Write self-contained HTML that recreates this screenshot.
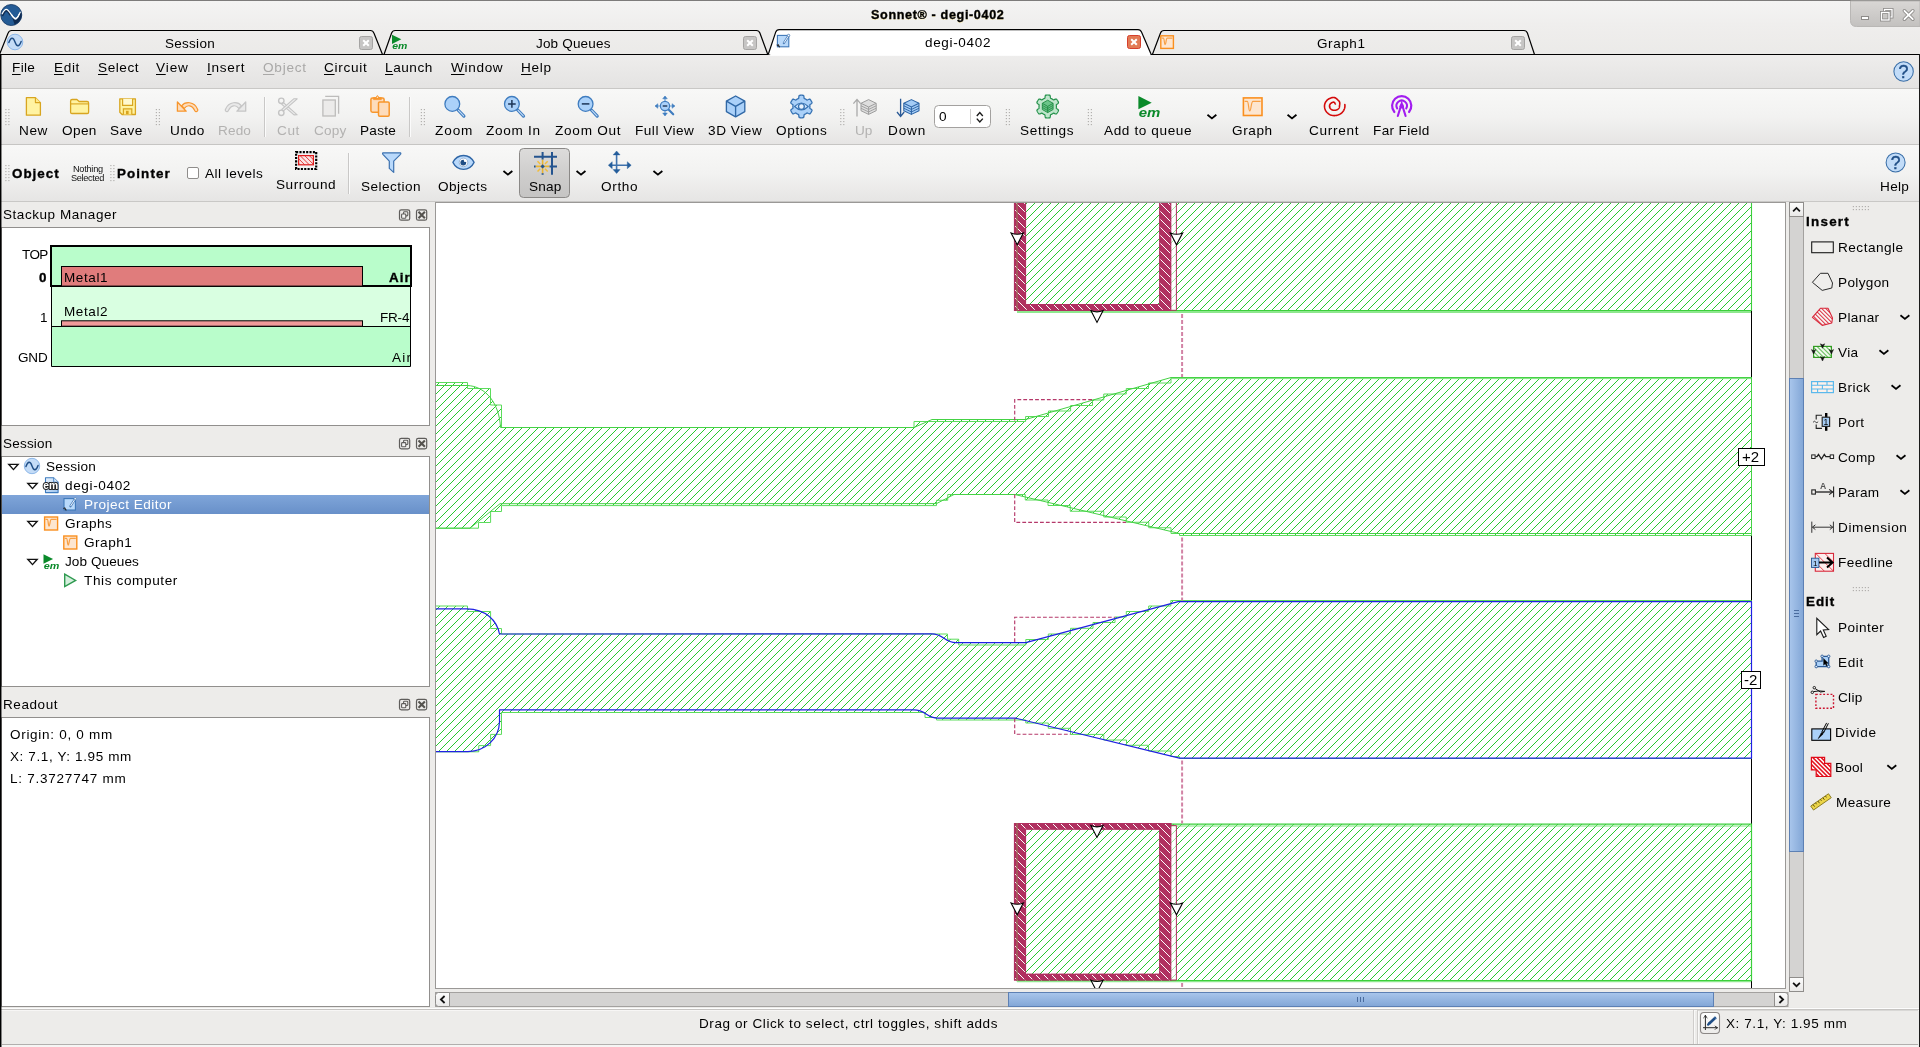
<!DOCTYPE html>
<html lang="en"><head><meta charset="utf-8"><title>Sonnet - degi-0402</title><style>
html,body{margin:0;padding:0}
body{width:1920px;height:1047px;position:relative;overflow:hidden;background:#edecea;font-family:"Liberation Sans", sans-serif;font-size:13.5px;color:#000}
.t{position:absolute;z-index:5;will-change:transform;white-space:pre;line-height:20px;height:20px;font-family:"Liberation Sans", sans-serif}
u{text-decoration:underline;text-underline-offset:2px;text-decoration-thickness:1px}
svg{overflow:visible;display:block}
</style></head><body>
<div style="position:absolute;left:0px;top:0px;width:1920px;height:55px;background:linear-gradient(#f4f4f3,#efeeed 45%,#ebeae8);"></div>
<div style="position:absolute;left:0px;top:0px;width:1920px;height:1px;background:#7d7c7b;"></div>
<div style="position:absolute;left:0px;top:55px;width:1920px;height:33px;background:linear-gradient(#eeedec,#e4e3e2);"></div>
<div style="position:absolute;left:0px;top:88px;width:1920px;height:1px;background:#c9c8c6;"></div>
<div style="position:absolute;left:0px;top:89px;width:1920px;height:55px;background:linear-gradient(#f8f8f7,#f2f2f1 50%,#e6e5e4);"></div>
<div style="position:absolute;left:0px;top:144px;width:1920px;height:1px;background:#c6c5c3;"></div>
<div style="position:absolute;left:0px;top:145px;width:1920px;height:56px;background:linear-gradient(#f8f8f7,#f2f2f1 50%,#e6e5e4);"></div>
<div style="position:absolute;left:0px;top:201px;width:1920px;height:1px;background:#c9c8c6;"></div>
<div style="position:absolute;left:0px;top:54px;width:1px;height:993px;background:#000;z-index:9;"></div>
<div style="position:absolute;left:1px;top:54px;width:1px;height:993px;background:rgba(0,0,0,0.45);z-index:9;"></div>
<div style="position:absolute;left:1919px;top:54px;width:1px;height:993px;background:#1a1a1a;z-index:9;"></div>
<svg style="position:absolute;left:0px;top:0px;z-index:3;will-change:transform;" width="1920" height="60"><defs><linearGradient id="wcg" x1="0" y1="0" x2="0" y2="1"><stop offset="0" stop-color="#d9d7d5"/><stop offset="1" stop-color="#c3c1bf"/></linearGradient></defs><path d="M1850.5,1 V20.5 Q1850.5,26.5 1856.5,26.5 H1920 V1Z" fill="url(#wcg)" stroke="#b9b7b5"/><rect x="1861.5" y="16.5" width="7" height="3" fill="#fff" stroke="#8d8b89" stroke-width="1"/><rect x="1884.5" y="9.5" width="7.5" height="7.5" fill="none" stroke="#8d8b89" stroke-width="3"/><rect x="1884.5" y="9.5" width="7.5" height="7.5" fill="none" stroke="#fff" stroke-width="1.3"/><rect x="1881.5" y="12.5" width="7.5" height="7.5" fill="#c9c7c5" stroke="#8d8b89" stroke-width="3"/><rect x="1881.5" y="12.5" width="7.5" height="7.5" fill="none" stroke="#fff" stroke-width="1.3"/><path d="M1904.4,10.8 l8.4,8.4 M1912.8,10.8 l-8.4,8.4" stroke="#8d8b89" stroke-width="3.6" stroke-linecap="round"/><path d="M1904.4,10.8 l8.4,8.4 M1912.8,10.8 l-8.4,8.4" stroke="#fff" stroke-width="1.8" stroke-linecap="round"/><circle cx="11.25" cy="15" r="10.5" fill="#245b95" stroke="#183c69" stroke-width="0.9"/><path d="M11,14.2 C13,18 14.4,19.4 15.5,19.4 C17.4,19.4 18.8,16.2 20.3,12.4 L21.55,13 A10.5,10.5 0 0 1 14.6,24.6 Z" fill="#102c52"/><path d="M2.6,15.2 C4.2,11.8 5.4,10.8 6.4,10.8 C7.6,10.8 8.6,12.2 10,14.4" fill="none" stroke="#102c52" stroke-width="2" stroke-linecap="round"/><path d="M2.2,13.8 C4,10.2 5.2,9.3 6.3,9.3 C8,9.3 9.4,11.6 11,14.2 C13,17.6 14.4,18.6 15.5,18.6 C17.3,18.6 18.6,15.8 20.2,12.2" fill="none" stroke="#fff" stroke-width="1.25" stroke-linecap="round"/><path d="M11.6,14.4 C13.2,17 14.4,18.2 15.5,18.2 C17,18.2 18.2,16.2 19.6,13.2 C18.4,16.8 17.2,19.2 15.5,19.2 C14.2,19.2 13,17.6 11.6,14.4Z" fill="#fff" stroke="#fff" stroke-width="0.8" stroke-linejoin="round"/><path d="M-0.5,54.5 L8.1,33 Q9,30.5 11.6,30.5 H370.4 Q373,30.5 373.9,33 L382.5,54.5" fill="none" stroke="#000" stroke-width="1.2" stroke-linejoin="round"/><path d="M384,54.5 L391.6,33 Q392.5,30.5 395.1,30.5 H756.4 Q759,30.5 759.9,33 L767.8,54.5" fill="none" stroke="#000" stroke-width="1.2" stroke-linejoin="round"/><path d="M1152.4,54.5 L1160.5,33 Q1161.4,30.5 1164,30.5 H1523.9 Q1526.5,30.5 1527.4,33 L1534.5,54.5" fill="none" stroke="#000" stroke-width="1.2" stroke-linejoin="round"/><path d="M0,54.5 H1920" stroke="#000" stroke-width="1.1"/><path d="M768.2,54.5 L775.7,32.1 Q776.6,29.6 779.2,29.6 H1138 Q1140.6,29.6 1141.5,32.1 L1151.2,54.5" fill="#fff" stroke="#000" stroke-width="1.2" stroke-linejoin="round"/><rect x="770.2" y="53.6" width="380" height="2.2" fill="#fff"/><rect x="359.5" y="36.5" width="13" height="13" rx="2" fill="#c6c5c4" stroke="#a5a4a3"/><path d="M363.2,40.2 l5.6,5.6 M368.8,40.2 l-5.6,5.6" stroke="#fff" stroke-width="2"/><rect x="743.5" y="36.5" width="13" height="13" rx="2" fill="#c6c5c4" stroke="#a5a4a3"/><path d="M747.2,40.2 l5.6,5.6 M752.8,40.2 l-5.6,5.6" stroke="#fff" stroke-width="2"/><rect x="1127.5" y="35.5" width="13" height="13" rx="2" fill="#e27a55" stroke="#d63f2c"/><path d="M1131.2,39.2 l5.6,5.6 M1136.8,39.2 l-5.6,5.6" stroke="#fff" stroke-width="2"/><rect x="1511.5" y="36.5" width="13" height="13" rx="2" fill="#c6c5c4" stroke="#a5a4a3"/><path d="M1515.2,40.2 l5.6,5.6 M1520.8,40.2 l-5.6,5.6" stroke="#fff" stroke-width="2"/><circle cx="15" cy="42" r="7.8" fill="#c4dcf7" stroke="#8db7e8" stroke-width="1"/><path d="M8.8575,42.585 C10.905,36.93 13.245,36.93 15,42 C16.755,47.07 19.095,47.07 21.1425,41.415" fill="none" stroke="#1f4e86" stroke-width="1.4625" stroke-linecap="round"/><g transform="translate(392.2,35.1) scale(0.7)"><path d="M-0.3,-0.6 L13,6 L-0.3,12.6Z" fill="#0a8a2a" stroke="none" stroke-width="1" /><text x="0" y="20.1" font-family='"Liberation Sans",sans-serif' font-size="13.2" font-weight="bold" font-style="italic" fill="#0a8a2a" textLength="21.6" lengthAdjust="spacingAndGlyphs">em</text></g><rect x="777.4" y="35.4" width="11.4" height="11.4" fill="#b9d9fa" stroke="#3f78b8" stroke-width="1.1"/><path d="M783.9,43 L788.4,35.9" stroke="#4f80ba" stroke-width="2.3" stroke-linecap="round"/><path d="M784,42.8 L788.1,36.4" stroke="#eef5fd" stroke-width="1"/><circle cx="788.6" cy="35.5" r="1.2" fill="#fff" stroke="#4f80ba" stroke-width="0.8"/><path d="M776.6,45 l3.2,1.4 M778,44 l1.4,3.4" stroke="#222" stroke-width="0.9"/><rect x="1160.8" y="35.8" width="12.6" height="12.6" fill="#fde6d0" stroke="#fa8f1e" stroke-width="1.4"/><path d="M1161.61,38.1032 h1.76129 c1.08387,0 0.812903,6.50323 1.76129,6.50323 c0.948387,0 0.812903,-6.50323 2.16774,-6.50323 h5.14839" fill="none" stroke="#f8a045" stroke-width="1.2" /></svg>
<span class="t" id="t0" style="left:871.20px;top:5.00px;font-size:12.6px;letter-spacing:0.642px;color:#000;font-weight:bold;-webkit-text-stroke:0.35px;text-shadow:0 1px 0 #fff4c8;">Sonnet® - degi-0402</span>
<span class="t" id="t1" style="left:165.00px;top:33.50px;font-size:13.5px;letter-spacing:0.278px;color:#000;">Session</span>
<span class="t" id="t2" style="left:535.90px;top:33.50px;font-size:13.5px;letter-spacing:0.176px;color:#000;">Job Queues</span>
<span class="t" id="t3" style="left:925.00px;top:32.50px;font-size:13.5px;letter-spacing:0.667px;color:#000;">degi-0402</span>
<span class="t" id="t4" style="left:1317.40px;top:33.50px;font-size:13.5px;letter-spacing:0.574px;color:#000;">Graph1</span>
<span class="t" id="t5" style="left:12.40px;top:57.50px;font-size:13.6px;letter-spacing:0.326px;color:#000;"><u>F</u>ile</span>
<span class="t" id="t6" style="left:53.90px;top:57.50px;font-size:13.6px;letter-spacing:0.654px;color:#000;"><u>E</u>dit</span>
<span class="t" id="t7" style="left:97.70px;top:57.50px;font-size:13.6px;letter-spacing:0.561px;color:#000;"><u>S</u>elect</span>
<span class="t" id="t8" style="left:156.40px;top:57.50px;font-size:13.6px;letter-spacing:0.889px;color:#000;"><u>V</u>iew</span>
<span class="t" id="t9" style="left:206.90px;top:57.50px;font-size:13.6px;letter-spacing:0.717px;color:#000;"><u>I</u>nsert</span>
<span class="t" id="t10" style="left:262.70px;top:57.50px;font-size:13.6px;letter-spacing:0.761px;color:#a9a8a7;"><u>O</u>bject</span>
<span class="t" id="t11" style="left:323.70px;top:57.50px;font-size:13.6px;letter-spacing:0.728px;color:#000;"><u>C</u>ircuit</span>
<span class="t" id="t12" style="left:384.90px;top:57.50px;font-size:13.6px;letter-spacing:0.558px;color:#000;"><u>L</u>aunch</span>
<span class="t" id="t13" style="left:450.70px;top:57.50px;font-size:13.6px;letter-spacing:0.665px;color:#000;"><u>W</u>indow</span>
<span class="t" id="t14" style="left:520.70px;top:57.50px;font-size:13.6px;letter-spacing:0.677px;color:#000;"><u>H</u>elp</span>
<span class="t" id="t15" style="left:18.90px;top:120.50px;font-size:13.6px;letter-spacing:0.598px;color:#000;">New</span>
<span class="t" id="t16" style="left:61.90px;top:120.50px;font-size:13.6px;letter-spacing:0.378px;color:#000;">Open</span>
<span class="t" id="t17" style="left:110.40px;top:120.50px;font-size:13.6px;letter-spacing:0.472px;color:#000;">Save</span>
<span class="t" id="t18" style="left:169.90px;top:120.50px;font-size:13.6px;letter-spacing:0.633px;color:#000;">Undo</span>
<span class="t" id="t19" style="left:218.40px;top:120.50px;font-size:13.6px;letter-spacing:0.133px;color:#b3b2b1;">Redo</span>
<span class="t" id="t20" style="left:276.90px;top:120.50px;font-size:13.6px;letter-spacing:0.622px;color:#b3b2b1;">Cut</span>
<span class="t" id="t21" style="left:313.90px;top:120.50px;font-size:13.6px;letter-spacing:0.222px;color:#b3b2b1;">Copy</span>
<span class="t" id="t22" style="left:360.40px;top:120.50px;font-size:13.6px;letter-spacing:0.284px;color:#000;">Paste</span>
<span class="t" id="t23" style="left:435.10px;top:120.50px;font-size:13.6px;letter-spacing:0.883px;color:#000;">Zoom</span>
<span class="t" id="t24" style="left:486.40px;top:120.50px;font-size:13.6px;letter-spacing:0.704px;color:#000;">Zoom In</span>
<span class="t" id="t25" style="left:554.70px;top:120.50px;font-size:13.6px;letter-spacing:0.738px;color:#000;">Zoom Out</span>
<span class="t" id="t26" style="left:634.80px;top:120.50px;font-size:13.6px;letter-spacing:0.499px;color:#000;">Full View</span>
<span class="t" id="t27" style="left:707.90px;top:120.50px;font-size:13.6px;letter-spacing:0.571px;color:#000;">3D View</span>
<span class="t" id="t28" style="left:775.90px;top:120.50px;font-size:13.6px;letter-spacing:0.640px;color:#000;">Options</span>
<span class="t" id="t29" style="left:855.40px;top:120.50px;font-size:13.6px;letter-spacing:0.009px;color:#b3b2b1;">Up</span>
<span class="t" id="t30" style="left:888.40px;top:120.50px;font-size:13.6px;letter-spacing:0.845px;color:#000;">Down</span>
<span class="t" id="t31" style="left:1019.90px;top:120.50px;font-size:13.6px;letter-spacing:0.639px;color:#000;">Settings</span>
<span class="t" id="t32" style="left:1103.90px;top:120.50px;font-size:13.6px;letter-spacing:0.610px;color:#000;">Add to queue</span>
<span class="t" id="t33" style="left:1231.90px;top:120.50px;font-size:13.6px;letter-spacing:0.580px;color:#000;">Graph</span>
<span class="t" id="t34" style="left:1308.90px;top:120.50px;font-size:13.6px;letter-spacing:0.712px;color:#000;">Current</span>
<span class="t" id="t35" style="left:1372.70px;top:120.50px;font-size:13.6px;letter-spacing:0.332px;color:#000;">Far Field</span>
<span class="t" id="t36" style="left:939.20px;top:106.50px;font-size:13.6px;letter-spacing:0.038px;color:#000;">0</span>
<span class="t" id="t37" style="left:11.90px;top:163.50px;font-size:13.4px;letter-spacing:1.006px;color:#000;font-weight:bold;-webkit-text-stroke:0.35px;">Object</span>
<span class="t" id="t38" style="left:72.70px;top:159.00px;font-size:9.2px;letter-spacing:-0.262px;color:#111;">Nothing</span>
<span class="t" id="t39" style="left:71.20px;top:168.00px;font-size:9.2px;letter-spacing:-0.338px;color:#111;">Selected</span>
<span class="t" id="t40" style="left:116.90px;top:163.50px;font-size:13.4px;letter-spacing:1.093px;color:#000;font-weight:bold;-webkit-text-stroke:0.35px;">Pointer</span>
<span class="t" id="t41" style="left:205.40px;top:163.50px;font-size:13.6px;letter-spacing:0.473px;color:#000;">All levels</span>
<span class="t" id="t42" style="left:276.00px;top:174.50px;font-size:13.6px;letter-spacing:0.525px;color:#000;">Surround</span>
<span class="t" id="t43" style="left:360.90px;top:176.50px;font-size:13.6px;letter-spacing:0.460px;color:#000;">Selection</span>
<span class="t" id="t44" style="left:438.20px;top:176.50px;font-size:13.6px;letter-spacing:0.484px;color:#000;">Objects</span>
<span class="t" id="t45" style="left:529.10px;top:176.50px;font-size:13.6px;letter-spacing:0.150px;color:#000;">Snap</span>
<span class="t" id="t46" style="left:600.90px;top:176.50px;font-size:13.6px;letter-spacing:0.650px;color:#000;">Ortho</span>
<span class="t" id="t47" style="left:1880.40px;top:176.50px;font-size:13.6px;letter-spacing:0.310px;color:#000;">Help</span>
<span class="t" id="t48" style="left:2.80px;top:204.50px;font-size:13.5px;letter-spacing:0.549px;color:#000;">Stackup Manager</span>
<div style="position:absolute;left:1px;top:227px;width:429px;height:199px;background:#fff;border:1px solid #918f8d;box-sizing:border-box;"></div>
<span class="t" id="t49" style="left:21.60px;top:244.50px;font-size:13.5px;letter-spacing:-0.600px;color:#000;">TOP</span>
<span class="t" id="t50" style="left:38.60px;top:267.50px;font-size:13.4px;letter-spacing:0.747px;color:#000;font-weight:bold;-webkit-text-stroke:0.35px;">0</span>
<span class="t" id="t51" style="left:63.80px;top:267.50px;font-size:13.5px;letter-spacing:0.594px;color:#000;">Metal1</span>
<span class="t" id="t52" style="left:389.20px;top:267.50px;font-size:13.4px;letter-spacing:1.045px;color:#000;font-weight:bold;-webkit-text-stroke:0.35px;">Air</span>
<span class="t" id="t53" style="left:63.80px;top:301.50px;font-size:13.5px;letter-spacing:0.594px;color:#000;">Metal2</span>
<span class="t" id="t54" style="left:40.20px;top:307.50px;font-size:13.5px;letter-spacing:-0.600px;color:#000;">1</span>
<span class="t" id="t55" style="left:380.40px;top:307.50px;font-size:13.5px;letter-spacing:-0.200px;color:#000;">FR-4</span>
<span class="t" id="t56" style="left:17.70px;top:347.50px;font-size:13.5px;letter-spacing:-0.150px;color:#000;">GND</span>
<span class="t" id="t57" style="left:391.80px;top:347.50px;font-size:13.5px;letter-spacing:1.200px;color:#000;">Air</span>
<span class="t" id="t58" style="left:2.80px;top:433.50px;font-size:13.5px;letter-spacing:0.211px;color:#000;">Session</span>
<div style="position:absolute;left:1px;top:456px;width:429px;height:231px;background:#fff;border:1px solid #918f8d;box-sizing:border-box;"></div>
<div style="position:absolute;left:2px;top:495px;width:427px;height:19px;background:linear-gradient(#7fa5d9,#6890c9);"></div>
<span class="t" id="t59" style="left:45.80px;top:456.50px;font-size:13.6px;letter-spacing:0.254px;color:#000;">Session</span>
<span class="t" id="t60" style="left:64.70px;top:475.50px;font-size:13.6px;letter-spacing:0.616px;color:#000;">degi-0402</span>
<span class="t" id="t61" style="left:83.80px;top:494.50px;font-size:13.6px;letter-spacing:0.453px;color:#fff;">Project Editor</span>
<span class="t" id="t62" style="left:64.70px;top:513.50px;font-size:13.6px;letter-spacing:0.464px;color:#000;">Graphs</span>
<span class="t" id="t63" style="left:83.80px;top:532.50px;font-size:13.6px;letter-spacing:0.511px;color:#000;">Graph1</span>
<span class="t" id="t64" style="left:64.70px;top:551.50px;font-size:13.6px;letter-spacing:0.065px;color:#000;">Job Queues</span>
<span class="t" id="t65" style="left:83.80px;top:570.50px;font-size:13.6px;letter-spacing:0.606px;color:#000;">This computer</span>
<span class="t" id="t66" style="left:2.80px;top:694.50px;font-size:13.5px;letter-spacing:0.576px;color:#000;">Readout</span>
<div style="position:absolute;left:1px;top:717px;width:429px;height:290px;background:#fff;border:1px solid #918f8d;box-sizing:border-box;"></div>
<span class="t" id="t67" style="left:9.60px;top:724.50px;font-size:13.5px;letter-spacing:0.708px;color:#000;">Origin: 0, 0 mm</span>
<span class="t" id="t68" style="left:9.60px;top:746.50px;font-size:13.5px;letter-spacing:0.617px;color:#000;">X: 7.1, Y: 1.95 mm</span>
<span class="t" id="t69" style="left:9.60px;top:768.50px;font-size:13.5px;letter-spacing:0.759px;color:#000;">L: 7.3727747 mm</span>
<svg style="position:absolute;left:0px;top:0px;z-index:3;will-change:transform;" width="1920" height="1047"><rect x="399.5" y="209.8" width="10.2" height="10.4" rx="1.8" fill="#edecea" stroke="#5f5d5b" stroke-width="1.2"/><rect x="403.6" y="211.7" width="4.2" height="4.2" rx="0.8" fill="none" stroke="#5f5d5b" stroke-width="1.1"/><rect x="401.6" y="214" width="4.2" height="4.2" rx="0.8" fill="#f6f5f4" stroke="#5f5d5b" stroke-width="1.1"/><rect x="416.5" y="209.8" width="10.2" height="10.4" rx="1.8" fill="#edecea" stroke="#5f5d5b" stroke-width="1.2"/><path d="M418.5,211.8 l6.4,6.4 M424.9,211.8 l-6.4,6.4" stroke="#55534f" stroke-width="2.1"/><rect x="51" y="246" width="360" height="40" fill="#b9fdcb"/><rect x="51" y="286" width="360" height="40" fill="#d9ffe1"/><rect x="51" y="326" width="360" height="40" fill="#b9fdcb"/><path d="M51.5,286 V366.5 H410.5 V286 M51,326.5 H411" fill="none" stroke="#000" stroke-width="1"/><path d="M51,246 H411 V286 H51Z" fill="none" stroke="#000" stroke-width="2"/><rect x="61.5" y="266.5" width="301" height="19.6" fill="#e07c7c" stroke="#000" stroke-width="1"/><rect x="61.5" y="320.8" width="301" height="5.4" fill="#f09a9a" stroke="#000" stroke-width="1"/><rect x="399.5" y="438.4" width="10.2" height="10.4" rx="1.8" fill="#edecea" stroke="#5f5d5b" stroke-width="1.2"/><rect x="403.6" y="440.3" width="4.2" height="4.2" rx="0.8" fill="none" stroke="#5f5d5b" stroke-width="1.1"/><rect x="401.6" y="442.6" width="4.2" height="4.2" rx="0.8" fill="#f6f5f4" stroke="#5f5d5b" stroke-width="1.1"/><rect x="416.5" y="438.4" width="10.2" height="10.4" rx="1.8" fill="#edecea" stroke="#5f5d5b" stroke-width="1.2"/><path d="M418.5,440.4 l6.4,6.4 M424.9,440.4 l-6.4,6.4" stroke="#55534f" stroke-width="2.1"/><path d="M8.75,464.3 h9.4 l-4.7,5.3z" fill="#fff" stroke="#111" stroke-width="1.35" stroke-linejoin="miter"/><path d="M27.8,483.3 h9.4 l-4.7,5.3z" fill="#fff" stroke="#111" stroke-width="1.35" stroke-linejoin="miter"/><path d="M27.8,521.3 h9.4 l-4.7,5.3z" fill="#fff" stroke="#111" stroke-width="1.35" stroke-linejoin="miter"/><path d="M27.8,559.3 h9.4 l-4.7,5.3z" fill="#fff" stroke="#111" stroke-width="1.35" stroke-linejoin="miter"/><circle cx="32" cy="466" r="7.7" fill="#c4dcf7" stroke="#8db7e8" stroke-width="1"/><path d="M25.9363,466.577 C27.9575,460.995 30.2675,460.995 32,466 C33.7325,471.005 36.0425,471.005 38.0637,465.423" fill="none" stroke="#1f4e86" stroke-width="1.44375" stroke-linecap="round"/><defs><linearGradient id="docg" x1="0" y1="0" x2="1" y2="1"><stop offset="0" stop-color="#eaf3fd"/><stop offset="1" stop-color="#9cc3ee"/></linearGradient></defs><path d="M45.5,477.8 h8.2 l4.4,4.4 v10.4 h-12.6z" fill="url(#docg)" stroke="#3f7cbf" stroke-width="1.1" stroke-linejoin="round"/><path d="M53.7,477.8 v4.4 h4.4" fill="#d8e8fb" stroke="#3f7cbf" stroke-width="0.9" stroke-linejoin="round"/><text x="43.3" y="489" font-family='"Liberation Sans",sans-serif' font-size="10.8" font-weight="bold" fill="#fff" stroke="#222" stroke-width="2.1" paint-order="stroke" stroke-linejoin="round" textLength="14.8" lengthAdjust="spacingAndGlyphs">em</text><rect x="64" y="498.6" width="11.4" height="11.4" fill="#b9d9fa" stroke="#3f78b8" stroke-width="1.1"/><path d="M70.5,506.2 L75,499.1" stroke="#4f80ba" stroke-width="2.3" stroke-linecap="round"/><path d="M70.6,506 L74.7,499.6" stroke="#eef5fd" stroke-width="1"/><circle cx="75.2" cy="498.7" r="1.2" fill="#fff" stroke="#4f80ba" stroke-width="0.8"/><path d="M63.2,508.2 l3.2,1.4 M64.6,507.2 l1.4,3.4" stroke="#222" stroke-width="0.9"/><rect x="44.6" y="517" width="13" height="13" fill="#fde6d0" stroke="#fa8f1e" stroke-width="1.4"/><path d="M45.4387,519.376 h1.8172 c1.11828,0 0.83871,6.70968 1.8172,6.70968 c0.978495,0 0.83871,-6.70968 2.23656,-6.70968 h5.31183" fill="none" stroke="#f8a045" stroke-width="1.2" /><rect x="63.8" y="536" width="13" height="13" fill="#fde6d0" stroke="#fa8f1e" stroke-width="1.4"/><path d="M64.6387,538.376 h1.8172 c1.11828,0 0.83871,6.70968 1.8172,6.70968 c0.978495,0 0.83871,-6.70968 2.23656,-6.70968 h5.31183" fill="none" stroke="#f8a045" stroke-width="1.2" /><g transform="translate(43.7,554.8) scale(0.72)"><path d="M-0.3,-0.6 L13,6 L-0.3,12.6Z" fill="#0a8a2a" stroke="none" stroke-width="1" /><text x="0" y="20.1" font-family='"Liberation Sans",sans-serif' font-size="13.2" font-weight="bold" font-style="italic" fill="#0a8a2a" textLength="21.6" lengthAdjust="spacingAndGlyphs">em</text></g><path d="M64.7,574.2 L75.6,580.4 L64.7,586.6Z" fill="#d5efdd" stroke="#2f9a50" stroke-width="1.4" stroke-linejoin="miter"/><rect x="399.5" y="699.4" width="10.2" height="10.4" rx="1.8" fill="#edecea" stroke="#5f5d5b" stroke-width="1.2"/><rect x="403.6" y="701.3" width="4.2" height="4.2" rx="0.8" fill="none" stroke="#5f5d5b" stroke-width="1.1"/><rect x="401.6" y="703.6" width="4.2" height="4.2" rx="0.8" fill="#f6f5f4" stroke="#5f5d5b" stroke-width="1.1"/><rect x="416.5" y="699.4" width="10.2" height="10.4" rx="1.8" fill="#edecea" stroke="#5f5d5b" stroke-width="1.2"/><path d="M418.5,701.4 l6.4,6.4 M424.9,701.4 l-6.4,6.4" stroke="#55534f" stroke-width="2.1"/></svg>
<div style="position:absolute;left:435px;top:202px;width:1351px;height:787px;background:#f5f4f3;border:1px solid #9a9896;box-sizing:border-box;"></div>
<svg style="position:absolute;left:436px;top:203px;overflow:hidden;" width="1349" height="785" viewBox="436 203 1349 785"><defs><pattern id="hg" width="8" height="8" patternUnits="userSpaceOnUse"><g fill="#29c731" shape-rendering="crispEdges"><rect x="0" y="5" width="1" height="1"/><rect x="1" y="4" width="1" height="1"/><rect x="2" y="3" width="1" height="1"/><rect x="3" y="2" width="1" height="1"/><rect x="4" y="1" width="1" height="1"/><rect x="5" y="0" width="1" height="1"/><rect x="6" y="7" width="1" height="1"/><rect x="7" y="6" width="1" height="1"/></g></pattern><pattern id="hv" width="8" height="8" patternUnits="userSpaceOnUse"><rect width="8" height="8" fill="#b03060"/><g fill="#fff" shape-rendering="crispEdges"><rect x="0" y="3" width="1" height="1"/><rect x="1" y="4" width="1" height="1"/><rect x="2" y="5" width="1" height="1"/><rect x="3" y="6" width="1" height="1"/><rect x="4" y="7" width="1" height="1"/><rect x="5" y="0" width="1" height="1"/><rect x="6" y="1" width="1" height="1"/><rect x="7" y="2" width="1" height="1"/></g></pattern></defs><rect x="436" y="203" width="1349" height="785" fill="#fff"/><g fill="url(#hg)" stroke="none"><rect x="1017" y="195" width="734.5" height="116.5"/><rect x="1017" y="824" width="734.5" height="157.3"/><polygon points="430,382.5 467.5,382.5 467.5,388.5 490.5,388.5 490.5,405 501.5,405 501.5,427.5 914,427.5 914,421.5 1025.6,421.5 1025.6,416.5 1048.5,416.5 1048.5,411 1070.6,411 1070.6,405.5 1092.5,405.5 1092.5,400 1103.75,400 1103.75,394 1126.25,394 1126.25,388.5 1148.5,388.5 1148.5,383 1171,383 1171,377.5 1751.5,377.5 1751.5,535.5 1179.5,535.5 1179.5,533.5 1171,533.5 1171,527.75 1148.75,527.75 1148.75,522.25 1126.25,522.25 1126.25,517 1103.75,517 1103.75,511.25 1070.25,511.25 1070.25,505.5 1048,505.5 1048,500 1025.25,500 1025.25,494.5 947.75,494.5 947.75,500.25 936.5,500.25 936.5,505.6 501.5,505.6 501.5,511.5 490.6,511.5 490.6,522.5 478.5,522.5 478.5,528.2 430,528.2"/><path d="M430,385.5 L467,385.5 C486,386 499.5,404 500.5,427.5 L914,427.5 L932,419.5 L1025.6,419.5 L1171,377.5 L1751.5,377.5 L1751.5,533.5 L1179.5,533.5 L1014.75,494.5 L954,494.5 L936.5,503.6 L500,503.7 L470,528.2 L430,528.2Z"/><polygon points="430,606 467.5,606 467.5,611.5 490.6,611.5 490.6,628.5 501.5,628.5 501.5,634 947.5,634 947.5,639.2 958.7,639.2 958.7,645 1025.8,645 1025.8,639.5 1048.3,639.5 1048.3,634 1070.5,634 1070.5,628.3 1093,628.3 1093,622.5 1115,622.5 1115,617 1126.3,617 1126.3,611.5 1148.7,611.5 1148.7,606 1170.8,606 1170.8,600.5 1751.5,600.5 1751.5,758.5 1179.4,758.5 1179.4,756.5 1171,756.5 1171,751 1148.5,751 1148.5,745.25 1126.5,745.25 1126.5,740 1103.75,740 1103.75,734.4 1070.5,734.4 1070.5,728.3 1048.3,728.3 1048.3,723 1025.8,723 1025.8,720 936.5,720 936.5,717.5 925,717.5 925,712.5 501.5,712.5 501.5,734.4 490.6,734.4 490.6,745.6 478.75,745.6 478.75,751.8 430,751.8"/><path d="M430,608.8 L467,608.8 C485,609 497,620 499.5,634 L931.7,633.9 C944,634 944,642.6 956,642.6 L1025.8,642.6 L1178.3,601.7 L1751.5,601.7 L1751.5,758.2 L1179.4,758.2 L1015.8,718.2 L938,718.2 C926,718 926,709.9 914,709.9 L499.5,709.9 L499.5,722 C499,738 486,751.3 468,751.6 L430,751.6Z"/></g><rect x="1751" y="203" width="1" height="785" fill="#000"/><g fill="none" stroke="#4fd64f" stroke-width="1"><path d="M1017,310.5 H1751.5 V203" stroke="#3ccf3c" stroke-width="1.1"/><path d="M1017,312 H1751" stroke="#8ee88e" stroke-width="1.9"/><path d="M1017,981.3 V824.2 H1751.5 V981.3" stroke="#3ccf3c" stroke-width="1.2"/><path d="M1172,826 H1751" stroke="#7be37b"/><path d="M1017,980.5 H1751.5" stroke="#3ccf3c" stroke-width="1.1"/><path d="M1017,981.6 H1751" stroke="#8ee88e" stroke-width="1.2"/><polygon points="430,382.5 467.5,382.5 467.5,388.5 490.5,388.5 490.5,405 501.5,405 501.5,427.5 914,427.5 914,421.5 1025.6,421.5 1025.6,416.5 1048.5,416.5 1048.5,411 1070.6,411 1070.6,405.5 1092.5,405.5 1092.5,400 1103.75,400 1103.75,394 1126.25,394 1126.25,388.5 1148.5,388.5 1148.5,383 1171,383 1171,377.5 1751.5,377.5 1751.5,535.5 1179.5,535.5 1179.5,533.5 1171,533.5 1171,527.75 1148.75,527.75 1148.75,522.25 1126.25,522.25 1126.25,517 1103.75,517 1103.75,511.25 1070.25,511.25 1070.25,505.5 1048,505.5 1048,500 1025.25,500 1025.25,494.5 947.75,494.5 947.75,500.25 936.5,500.25 936.5,505.6 501.5,505.6 501.5,511.5 490.6,511.5 490.6,522.5 478.5,522.5 478.5,528.2 430,528.2" stroke="#5cdc5c"/><path d="M430,385.5 L467,385.5 C486,386 499.5,404 500.5,427.5 L914,427.5 L932,419.5 L1025.6,419.5 L1171,377.5 L1751.5,377.5 L1751.5,533.5 L1179.5,533.5 L1014.75,494.5 L954,494.5 L936.5,503.6 L500,503.7 L470,528.2 L430,528.2Z" stroke="#45d245"/><path d="M1171,378.6 H1751" stroke="#7be37b"/><polygon points="430,606 467.5,606 467.5,611.5 490.6,611.5 490.6,628.5 501.5,628.5 501.5,634 947.5,634 947.5,639.2 958.7,639.2 958.7,645 1025.8,645 1025.8,639.5 1048.3,639.5 1048.3,634 1070.5,634 1070.5,628.3 1093,628.3 1093,622.5 1115,622.5 1115,617 1126.3,617 1126.3,611.5 1148.7,611.5 1148.7,606 1170.8,606 1170.8,600.5 1751.5,600.5 1751.5,758.5 1179.4,758.5 1179.4,756.5 1171,756.5 1171,751 1148.5,751 1148.5,745.25 1126.5,745.25 1126.5,740 1103.75,740 1103.75,734.4 1070.5,734.4 1070.5,728.3 1048.3,728.3 1048.3,723 1025.8,723 1025.8,720 936.5,720 936.5,717.5 925,717.5 925,712.5 501.5,712.5 501.5,734.4 490.6,734.4 490.6,745.6 478.75,745.6 478.75,751.8 430,751.8" stroke="#5cdc5c"/></g><path d="M430,608.8 L467,608.8 C485,609 497,620 499.5,634 L931.7,633.9 C944,634 944,642.6 956,642.6 L1025.8,642.6 L1178.3,601.7 L1751.5,601.7 L1751.5,758.2 L1179.4,758.2 L1015.8,718.2 L938,718.2 C926,718 926,709.9 914,709.9 L499.5,709.9 L499.5,722 C499,738 486,751.3 468,751.6 L430,751.6Z" fill="none" stroke="#2020e4" stroke-width="1.2" stroke-linejoin="round"/><path d="M1014,160 H1171.3 V310.8 H1014Z M1026,166.8 V304 H1159.3 V166.8Z" fill="url(#hv)" fill-rule="evenodd"/><path d="M1014.5,160.5 H1170.8 V310.3 H1014.5Z M1025.5,166.3 V304.5 H1159.8 V166.3Z" fill="none" stroke="#b03060" stroke-width="1.2"/><path d="M1014,823 H1171.3 V980.4 H1014Z M1026,829.6 V973.8 H1159.3 V829.6Z" fill="url(#hv)" fill-rule="evenodd"/><path d="M1014.5,823.5 H1170.8 V979.9 H1014.5Z M1025.5,829.1 V974.3 H1159.8 V829.1Z" fill="none" stroke="#b03060" stroke-width="1.2"/><rect x="1016.3" y="203" width="1.6" height="108" fill="#9a6a58" opacity="0.85"/><rect x="1016.3" y="823" width="1.6" height="157.5" fill="#9a6a58" opacity="0.85"/><rect x="1171.3" y="203" width="4.6" height="107" fill="#fff" opacity="0.55"/><rect x="1171.3" y="826" width="4.6" height="154" fill="#fff" opacity="0.55"/><path d="M1176.4,203 V310.3 H1171" fill="none" stroke="#b03060" stroke-width="1"/><path d="M1171,825.6 H1176.4 V980 H1171" fill="none" stroke="#b03060" stroke-width="1"/><g fill="none" stroke="#b5386a" stroke-width="1.15" stroke-dasharray="3.8,2.1"><path d="M1014.7,420.5 V399.6 H1092.5"/><path d="M1014.7,494.5 V522.3 H1126"/><path d="M1014.7,642 V617.2 H1115"/><path d="M1014.7,718.5 V734.2 H1070.5"/></g><g fill="none" stroke="#d283a5" stroke-width="2" stroke-dasharray="3.9,2.1"><path d="M1182.1,314 V377"/><path d="M1182.1,537.5 V600.5"/><path d="M1182.1,760.5 V823.5"/><path d="M1182.1,983 V988"/></g><path d="M1011.1,233 Q1017.2,235.6 1023.3,233 L1017.2,244.8Z" fill="#fff" stroke="#000" stroke-width="1.1" stroke-linejoin="miter"/><path d="M1170.4,233 Q1176.5,235.6 1182.6,233 L1176.5,244.8Z" fill="#fff" stroke="#000" stroke-width="1.1" stroke-linejoin="miter"/><path d="M1090.9,310.6 Q1097,313.2 1103.1,310.6 L1097,322.4Z" fill="#fff" stroke="#000" stroke-width="1.1" stroke-linejoin="miter"/><path d="M1090.9,825.6 Q1097,828.2 1103.1,825.6 L1097,837.4Z" fill="#fff" stroke="#000" stroke-width="1.1" stroke-linejoin="miter"/><path d="M1011.1,903 Q1017.2,905.6 1023.3,903 L1017.2,914.8Z" fill="#fff" stroke="#000" stroke-width="1.1" stroke-linejoin="miter"/><path d="M1170.4,903 Q1176.5,905.6 1182.6,903 L1176.5,914.8Z" fill="#fff" stroke="#000" stroke-width="1.1" stroke-linejoin="miter"/><path d="M1090.9,980.2 Q1097,982.8 1103.1,980.2 L1097,992Z" fill="#fff" stroke="#000" stroke-width="1.1" stroke-linejoin="miter"/><rect x="1738.5" y="448.5" width="26" height="17" fill="#fff" stroke="#000"/><rect x="1741.5" y="671.5" width="19" height="17" fill="#fff" stroke="#000"/></svg>
<span class="t" id="t70" style="left:1742.40px;top:446.50px;font-size:15px;letter-spacing:0.000px;color:#000;">+2</span>
<span class="t" id="t71" style="left:1744.00px;top:669.50px;font-size:15px;letter-spacing:0.000px;color:#000;">-2</span>
<svg style="position:absolute;left:0px;top:0px;" width="1920" height="1047"><defs><linearGradient id="sbh" x1="0" y1="0" x2="0" y2="1"><stop offset="0" stop-color="#a9c6ec"/><stop offset="1" stop-color="#82a6d6"/></linearGradient><linearGradient id="sbv" x1="0" y1="0" x2="1" y2="0"><stop offset="0" stop-color="#a9c6ec"/><stop offset="1" stop-color="#82a6d6"/></linearGradient><linearGradient id="btn" x1="0" y1="0" x2="0" y2="1"><stop offset="0" stop-color="#fdfdfd"/><stop offset="1" stop-color="#e9e8e7"/></linearGradient></defs><rect x="435.5" y="992.5" width="1352.5" height="14" fill="#d4d3d2" stroke="#a3a19f"/><rect x="1008.5" y="992.5" width="705" height="14" fill="url(#sbh)" stroke="#5d80b4"/><path d="M1357.5,997 v5 M1360.5,997 v5 M1363.5,997 v5" stroke="#4a6c9f" stroke-width="1"/><path d="M438.5,992.5 h11 v14 h-11 q-3,0 -3,-3 v-8 q0,-3 3,-3z" fill="url(#btn)" stroke="#8f8d8b"/><path d="M444.6,996 L440.9,999.5 L444.6,1003" fill="none" stroke="#111" stroke-width="1.8"/><path d="M1774.5,992.5 h10.5 q3,0 3,3 v8 q0,3 -3,3 h-10.5z" fill="url(#btn)" stroke="#8f8d8b"/><path d="M1779.4,996 L1783.1,999.5 L1779.4,1003" fill="none" stroke="#111" stroke-width="1.8"/><rect x="1789.5" y="202.5" width="14" height="789" fill="#d4d3d2" stroke="#a3a19f"/><rect x="1789.5" y="378.5" width="14" height="473" fill="url(#sbv)" stroke="#5d80b4"/><path d="M1794,610.5 h5 M1794,613.5 h5 M1794,616.5 h5" stroke="#4a6c9f" stroke-width="1"/><rect x="1789.5" y="202.5" width="14" height="14" fill="url(#btn)" stroke="#8f8d8b"/><path d="M1793.1,211.3 L1796.5,207.9 L1799.9,211.3" fill="none" stroke="#111" stroke-width="1.7"/><rect x="1789.5" y="977.5" width="14" height="14" fill="url(#btn)" stroke="#8f8d8b"/><path d="M1793.1,982.8 L1796.5,986.2 L1799.9,982.8" fill="none" stroke="#111" stroke-width="1.7"/></svg>
<span class="t" id="t72" style="left:1805.80px;top:211.50px;font-size:13.4px;letter-spacing:1.266px;color:#000;font-weight:bold;-webkit-text-stroke:0.35px;">Insert</span>
<span class="t" id="t73" style="left:1805.80px;top:591.50px;font-size:13.4px;letter-spacing:0.968px;color:#000;font-weight:bold;-webkit-text-stroke:0.35px;">Edit</span>
<span class="t" id="t74" style="left:1838.20px;top:237.50px;font-size:13.6px;letter-spacing:0.485px;color:#000;">Rectangle</span>
<span class="t" id="t75" style="left:1838.20px;top:272.50px;font-size:13.6px;letter-spacing:0.329px;color:#000;">Polygon</span>
<span class="t" id="t76" style="left:1838.20px;top:307.50px;font-size:13.6px;letter-spacing:0.361px;color:#000;">Planar</span>
<span class="t" id="t77" style="left:1838.20px;top:342.50px;font-size:13.6px;letter-spacing:0.347px;color:#000;">Via</span>
<span class="t" id="t78" style="left:1838.20px;top:377.50px;font-size:13.6px;letter-spacing:0.470px;color:#000;">Brick</span>
<span class="t" id="t79" style="left:1838.20px;top:412.50px;font-size:13.6px;letter-spacing:0.387px;color:#000;">Port</span>
<span class="t" id="t80" style="left:1838.20px;top:447.50px;font-size:13.6px;letter-spacing:0.278px;color:#000;">Comp</span>
<span class="t" id="t81" style="left:1838.20px;top:482.50px;font-size:13.6px;letter-spacing:0.263px;color:#000;">Param</span>
<span class="t" id="t82" style="left:1838.20px;top:517.50px;font-size:13.6px;letter-spacing:0.585px;color:#000;">Dimension</span>
<span class="t" id="t83" style="left:1838.20px;top:552.50px;font-size:13.6px;letter-spacing:0.392px;color:#000;">Feedline</span>
<span class="t" id="t84" style="left:1838.00px;top:617.50px;font-size:13.6px;letter-spacing:0.470px;color:#000;">Pointer</span>
<span class="t" id="t85" style="left:1838.00px;top:652.50px;font-size:13.6px;letter-spacing:0.621px;color:#000;">Edit</span>
<span class="t" id="t86" style="left:1838.00px;top:687.50px;font-size:13.6px;letter-spacing:0.293px;color:#000;">Clip</span>
<span class="t" id="t87" style="left:1834.90px;top:722.50px;font-size:13.6px;letter-spacing:0.644px;color:#000;">Divide</span>
<span class="t" id="t88" style="left:1834.90px;top:757.50px;font-size:13.6px;letter-spacing:0.227px;color:#000;">Bool</span>
<span class="t" id="t89" style="left:1836.10px;top:792.50px;font-size:13.6px;letter-spacing:0.318px;color:#000;">Measure</span>
<div style="position:absolute;left:0px;top:1007px;width:1920px;height:40px;background:#edecea;"></div>
<div style="position:absolute;left:0px;top:1007px;width:1920px;height:1px;background:#ebeae8;"></div>
<div style="position:absolute;left:0px;top:1008px;width:1920px;height:1px;background:#fdfdfd;"></div>
<div style="position:absolute;left:0px;top:1009px;width:1920px;height:1px;background:#c6c4c2;"></div>
<div style="position:absolute;left:0px;top:1010px;width:1920px;height:1px;background:#f7f6f5;"></div>
<div style="position:absolute;left:2px;top:1044px;width:1916px;height:1px;background:#b1afad;"></div>
<div style="position:absolute;left:2px;top:1045px;width:1916px;height:2px;background:#f6f5f4;"></div>
<div style="position:absolute;left:1693px;top:1010px;width:1px;height:34px;background:#cfcdcb;"></div>
<div style="position:absolute;left:1694px;top:1010px;width:1px;height:34px;background:#f9f9f8;"></div>
<div style="position:absolute;left:1697px;top:1010px;width:1px;height:34px;background:#cfcdcb;"></div>
<div style="position:absolute;left:1698px;top:1010px;width:1px;height:34px;background:#f9f9f8;"></div>
<div style="position:absolute;left:1698px;top:1010px;width:220px;height:1px;background:#d9d8d6;"></div>
<svg style="position:absolute;left:0px;top:0px;z-index:3;" width="1920" height="1047"><defs><linearGradient id="sbb" x1="0" y1="0" x2="0" y2="1"><stop offset="0" stop-color="#ffffff"/><stop offset="1" stop-color="#ecebe9"/></linearGradient></defs><rect x="1700.5" y="1012.5" width="19" height="21" rx="3.5" fill="url(#sbb)" stroke="#8b8785" stroke-width="1.1"/><path d="M1705.4,1015.4 V1030 M1703,1027.7 H1717.4 M1703.4,1018 Q1705,1017 1705.4,1015.2 Q1705.8,1017 1707.4,1018 M1715,1025.8 Q1716,1027.3 1717.6,1027.7 Q1716,1028.1 1715,1029.6" fill="none" stroke="#2a2a2a" stroke-width="1"/><path d="M1709,1023.7 L1715.9,1017.2" fill="none" stroke="#1f4e86" stroke-width="2.7" stroke-linecap="butt"/><path d="M1708.1,1024.6 L1709.8,1022.9" stroke="#1f4e86" stroke-width="2.2" stroke-linecap="round"/><path d="M1714.3,1017.2 L1716.2,1019.1" stroke="#4b7ab5" stroke-width="0.8"/></svg>
<span class="t" id="t90" style="left:698.80px;top:1013.50px;font-size:13.5px;letter-spacing:0.591px;color:#000;">Drag or Click to select, ctrl toggles, shift adds</span>
<span class="t" id="t91" style="left:1725.90px;top:1013.50px;font-size:13.5px;letter-spacing:0.582px;color:#000;">X: 7.1, Y: 1.95 mm</span>
<svg style="position:absolute;left:0px;top:0px;z-index:2;will-change:transform;" width="1920" height="1047"><path d="M1900.45,315.3 L1904.9,318.9 L1909.35,315.3" fill="none" stroke="#000" stroke-width="1.8" stroke-linecap="butt" stroke-linejoin="miter"/><path d="M1879.45,350.3 L1883.9,353.9 L1888.35,350.3" fill="none" stroke="#000" stroke-width="1.8" stroke-linecap="butt" stroke-linejoin="miter"/><path d="M1891.55,385.3 L1896,388.9 L1900.45,385.3" fill="none" stroke="#000" stroke-width="1.8" stroke-linecap="butt" stroke-linejoin="miter"/><path d="M1896.55,455.3 L1901,458.9 L1905.45,455.3" fill="none" stroke="#000" stroke-width="1.8" stroke-linecap="butt" stroke-linejoin="miter"/><path d="M1900.45,490.3 L1904.9,493.9 L1909.35,490.3" fill="none" stroke="#000" stroke-width="1.8" stroke-linecap="butt" stroke-linejoin="miter"/><path d="M1887.35,765.3 L1891.8,768.9 L1896.25,765.3" fill="none" stroke="#000" stroke-width="1.8" stroke-linecap="butt" stroke-linejoin="miter"/><rect x="1852.8" y="206" width="1.15" height="1.15" fill="#b0aeac"/><rect x="1852.8" y="209" width="1.15" height="1.15" fill="#b0aeac"/><rect x="1855.8" y="206" width="1.15" height="1.15" fill="#b0aeac"/><rect x="1855.8" y="209" width="1.15" height="1.15" fill="#b0aeac"/><rect x="1858.8" y="206" width="1.15" height="1.15" fill="#b0aeac"/><rect x="1858.8" y="209" width="1.15" height="1.15" fill="#b0aeac"/><rect x="1861.8" y="206" width="1.15" height="1.15" fill="#b0aeac"/><rect x="1861.8" y="209" width="1.15" height="1.15" fill="#b0aeac"/><rect x="1864.8" y="206" width="1.15" height="1.15" fill="#b0aeac"/><rect x="1864.8" y="209" width="1.15" height="1.15" fill="#b0aeac"/><rect x="1867.8" y="206" width="1.15" height="1.15" fill="#b0aeac"/><rect x="1867.8" y="209" width="1.15" height="1.15" fill="#b0aeac"/><rect x="1852.8" y="587" width="1.15" height="1.15" fill="#b0aeac"/><rect x="1852.8" y="590" width="1.15" height="1.15" fill="#b0aeac"/><rect x="1855.8" y="587" width="1.15" height="1.15" fill="#b0aeac"/><rect x="1855.8" y="590" width="1.15" height="1.15" fill="#b0aeac"/><rect x="1858.8" y="587" width="1.15" height="1.15" fill="#b0aeac"/><rect x="1858.8" y="590" width="1.15" height="1.15" fill="#b0aeac"/><rect x="1861.8" y="587" width="1.15" height="1.15" fill="#b0aeac"/><rect x="1861.8" y="590" width="1.15" height="1.15" fill="#b0aeac"/><rect x="1864.8" y="587" width="1.15" height="1.15" fill="#b0aeac"/><rect x="1864.8" y="590" width="1.15" height="1.15" fill="#b0aeac"/><rect x="1867.8" y="587" width="1.15" height="1.15" fill="#b0aeac"/><rect x="1867.8" y="590" width="1.15" height="1.15" fill="#b0aeac"/><rect x="1811.7" y="241.9" width="21.6" height="10.8" fill="#efeeec" stroke="#1a1a1a" stroke-width="1.1"/><path d="M1812.4,282.3 L1820.4,273.3 L1828,273.3 L1832.5,283 L1831.8,288 L1822.2,290.4 Z" fill="#efeeec" stroke="#2a2a2a" stroke-width="1.0" stroke-linejoin="round"/><path d="M1812.4,317.3 L1820.4,308.3 L1828,308.3 L1832.5,318 L1831.8,323 L1822.2,325.4 Z" fill="#f7f6f5"/><clipPath id="cp1"><path d="M1812.4,317.3 L1820.4,308.3 L1828,308.3 L1832.5,318 L1831.8,323 L1822.2,325.4 Z"/></clipPath><g clip-path="url(#cp1)"><path d="M1791.2,306 L1812.2,327 M1795.2,306 L1816.2,327 M1799.2,306 L1820.2,327 M1803.2,306 L1824.2,327 M1807.2,306 L1828.2,327 M1811.2,306 L1832.2,327 M1815.2,306 L1836.2,327 M1819.2,306 L1840.2,327 M1823.2,306 L1844.2,327 M1827.2,306 L1848.2,327 M1831.2,306 L1852.2,327 " fill="none" stroke="#dd3b4a" stroke-width="1.05" /></g><path d="M1812.4,317.3 L1820.4,308.3 L1828,308.3 L1832.5,318 L1831.8,323 L1822.2,325.4 Z" fill="none" stroke="#d8283a" stroke-width="1.1" stroke-linejoin="round"/><rect x="1813.6" y="346.4" width="17.8" height="11" fill="#f3faf0" stroke="none"/><clipPath id="cp2"><path d="M1813.6,346.4 h17.8 v11 h-17.8z"/></clipPath><g clip-path="url(#cp2)"><path d="M1803.8,346.4 L1814.8,357.4 M1808.2,346.4 L1819.2,357.4 M1812.6,346.4 L1823.6,357.4 M1817,346.4 L1828,357.4 M1821.4,346.4 L1832.4,357.4 M1825.8,346.4 L1836.8,357.4 M1830.2,346.4 L1841.2,357.4 " fill="none" stroke="#74c46a" stroke-width="1.25" /></g><rect x="1813.6" y="346.4" width="17.8" height="11" fill="none" stroke="#2f9a1f" stroke-width="1.15"/><path d="M1811.47,349.6 L1813.6,350.666 L1815.73,349.6 L1813.6,354.028Z" fill="#111" stroke="#111" stroke-width="0.5" /><path d="M1829.27,349.6 L1831.4,350.666 L1833.53,349.6 L1831.4,354.028Z" fill="#111" stroke="#111" stroke-width="0.5" /><path d="M1820.37,343.8 L1822.5,344.866 L1824.63,343.8 L1822.5,348.228Z" fill="#111" stroke="#111" stroke-width="0.5" /><path d="M1820.37,356.6 L1822.5,357.666 L1824.63,356.6 L1822.5,361.028Z" fill="#111" stroke="#111" stroke-width="0.5" /><rect x="1811.6" y="381.6" width="21.8" height="11" fill="#fdf1ea" stroke="#5bb9ec" stroke-width="1.2"/><path d="M1811.6,385.3 h21.8 M1811.6,389 h21.8 M1817.6,381.6 v3.7 M1827,381.6 v3.7 M1822.4,385.3 v3.7 M1817.6,389 v3.7 M1827,389 v3.7" fill="none" stroke="#5bb9ec" stroke-width="1.1" /><path d="M1822,415.2 H1816.2 V419.4 M1816.2,424.4 V428.4 H1822" fill="none" stroke="#222" stroke-width="1.1" /><path d="M1813,422.4 q1.3,-2.2 2.6,-0.4 q1.3,1.8 2.6,-0.4" fill="none" stroke="#333" stroke-width="0.9" /><rect x="1825" y="413" width="2.4" height="17.8" fill="#000"/><rect x="1822.2" y="417.2" width="7.4" height="9.2" fill="#a5cbf3" stroke="#2a2a2a" stroke-width="1.2"/><text x="1825.9" y="425.3" text-anchor="middle" font-family='"Liberation Sans",sans-serif' font-size="8.6" fill="#000">1</text><path d="M1815.3,456.7 h1.7 l1.5,-2.3 l2.9,4.7 l2.9,-4.7 l1.5,2.3 h4.2" fill="none" stroke="#222" stroke-width="1.3" stroke-linejoin="miter"/><rect x="1811.7" y="454.9" width="3.4" height="3.6" fill="#f4f3f2" stroke="#222" stroke-width="1"/><rect x="1830.2" y="454.9" width="3.4" height="3.6" fill="#f4f3f2" stroke="#222" stroke-width="1"/><rect x="1811.8" y="489.9" width="3.6" height="4.2" fill="#f4f3f2" stroke="#222" stroke-width="1.1"/><path d="M1815.6,492 H1832.4" fill="none" stroke="#444" stroke-width="1.6" /><path d="M1829.2,489.4 L1832.8,492 L1829.2,494.6 M1833.6,486.6 V497.2" fill="none" stroke="#222" stroke-width="1.1" /><text x="1823" y="489.3" text-anchor="middle" font-family='"Liberation Sans",sans-serif' font-size="8.6" font-weight="bold" fill="#555">A</text><path d="M1811.8,521.6 V532.8 M1833.4,521.6 V532.8 M1812.4,527.2 H1832.8 M1815.4,524.8 L1812.4,527.2 L1815.4,529.6 M1829.8,524.8 L1832.8,527.2 L1829.8,529.6" fill="none" stroke="#333" stroke-width="1.0" /><rect x="1815.3" y="553.4" width="18.2" height="17.8" fill="#fdeeee" stroke="none"/><clipPath id="cp3"><path d="M1815.3,553.4 h18.2 v17.8 h-18.2z"/></clipPath><g clip-path="url(#cp3)"><path d="M1797.5,553.4 L1815.3,571.2 M1806.6,553.4 L1824.4,571.2 M1815.7,553.4 L1833.5,571.2 M1824.8,553.4 L1842.6,571.2 " fill="none" stroke="#e0444f" stroke-width="1.0" /></g><rect x="1815.3" y="553.4" width="18.2" height="17.8" fill="none" stroke="#d8283a" stroke-width="1.1"/><rect x="1811.5" y="558.2" width="7.4" height="9.2" fill="#a5cbf3" stroke="#24548f" stroke-width="0.9"/><text x="1815.2" y="566" text-anchor="middle" font-family='"Liberation Sans",sans-serif' font-size="8" fill="#000">1</text><path d="M1819,562.5 H1832 M1827,557.6 L1832.6,562.5 L1827,567.4" fill="none" stroke="#000" stroke-width="2.0" stroke-linejoin="miter"/><path d="M1816.8,618.4 V634.6 L1820.6,631 L1823.6,637.4 L1826.2,636.2 L1823.3,630 L1828.6,629.6Z" fill="#fff" stroke="#1a1a1a" stroke-width="1.1" stroke-linejoin="miter"/><path d="M1816.2,666.6 V661.2 H1822.1 V656.3 H1828.7 V666.6Z" fill="#abd1f9" stroke="#2b5a96" stroke-width="1.3" stroke-linejoin="round"/><circle cx="1816.2" cy="661.2" r="1.25" fill="#eaf3fd" stroke="#2b5a96" stroke-width="0.9"/><circle cx="1816.2" cy="666.6" r="1.25" fill="#eaf3fd" stroke="#2b5a96" stroke-width="0.9"/><circle cx="1822.1" cy="656.3" r="1.25" fill="#eaf3fd" stroke="#2b5a96" stroke-width="0.9"/><circle cx="1828.7" cy="656.3" r="1.25" fill="#eaf3fd" stroke="#2b5a96" stroke-width="0.9"/><circle cx="1828.7" cy="666.6" r="1.25" fill="#eaf3fd" stroke="#2b5a96" stroke-width="0.9"/><path d="M1823.6,658.4 V665.2 L1825.2,663.8 L1826.4,666 L1827.4,665.5 L1826.3,663.4 L1828.2,663.2Z" fill="#000" stroke="#000" stroke-width="0.4" /><rect x="1815.9" y="694.4" width="17.6" height="13.8" fill="none" stroke="#cc1530" stroke-width="1.4" stroke-dasharray="1.9,1.75"/><path d="M1815.2,688.6 L1820.4,692 L1824.8,691.4 M1813.3,691.7 L1819,690.9 L1824.8,691.4" fill="none" stroke="#111" stroke-width="1.0" stroke-linejoin="round"/><circle cx="1814.3" cy="687.7" r="1.25" fill="#edecea" stroke="#111" stroke-width="0.9"/><circle cx="1812.3" cy="692.3" r="1.25" fill="#edecea" stroke="#111" stroke-width="0.9"/><rect x="1811.8" y="728.9" width="18.8" height="11.4" fill="#abd1f9" stroke="#000" stroke-width="1.1"/><path d="M1826.6,722.9 L1821.6,732.4 M1828.4,723.3 L1823.4,733.2" fill="none" stroke="#000" stroke-width="1.0" /><path d="M1823.6,731.4 L1821.2,733.2 L1818.2,738.6 L1822.6,734.6Z" fill="#000" stroke="#000" stroke-width="0.5" /><path d="M1811.4,757.4 H1824.6 V763.3 H1830.8 V776.5 H1816.2 V769.9 H1811.4Z" fill="#fff"/><clipPath id="cp4"><path d="M1811.4,757.4 H1824.6 V763.3 H1830.8 V776.5 H1816.2 V769.9 H1811.4Z"/></clipPath><g clip-path="url(#cp4)"><path d="M1791.2,757 L1811.2,777 M1795.4,757 L1815.4,777 M1799.6,757 L1819.6,777 M1803.8,757 L1823.8,777 M1808,757 L1828,777 M1812.2,757 L1832.2,777 M1816.4,757 L1836.4,777 M1820.6,757 L1840.6,777 M1824.8,757 L1844.8,777 M1829,757 L1849,777 " fill="none" stroke="#e3121f" stroke-width="1.55" /></g><path d="M1811.4,757.4 H1824.6 V763.3 H1830.8 V776.5 H1816.2 V769.9 H1811.4Z" fill="none" stroke="#e00a18" stroke-width="1.2" /><g transform="translate(1821,801.9) rotate(-34.8)"><rect x="-10.8" y="-2.4" width="21.6" height="4.8" fill="#ecd548" stroke="#8c7c22" stroke-width="0.9"/><path d="M-8,-2.4 v2.6 M-5,-2.4 v1.8 M-2,-2.4 v2.6 M1,-2.4 v1.8 M4,-2.4 v2.6 M7,-2.4 v1.8" fill="none" stroke="#5e5210" stroke-width="0.9" /></g><path d="M26.4,97.6 h9 l5,5 v12.6 h-14z" fill="#fff3a2" stroke="#d8a520" stroke-width="1.3" stroke-linejoin="round"/><path d="M35.4,97.6 v5 h5" fill="#ffe98a" stroke="#d8a520" stroke-width="1.1" stroke-linejoin="round"/><path d="M70.6,101 q0,-1.5 1.5,-1.5 h4.8 l2.2,2 h8 q1.5,0 1.5,1.5 v9.2 q0,1.3 -1.3,1.3 h-15.4 q-1.3,0 -1.3,-1.3z" fill="#fff3a2" stroke="#d8a520" stroke-width="1.3" stroke-linejoin="round"/><path d="M70.6,103.9 h17.9" fill="none" stroke="#d8a520" stroke-width="1.1" /><path d="M119.8,98.8 h15.6 v15.7 h-13.3 l-2.3,-2.3z" fill="#fff3a2" stroke="#d8a520" stroke-width="1.3" stroke-linejoin="round"/><path d="M122.6,98.8 v6.6 h10 v-6.6" fill="#fff9d0" stroke="#d8a520" stroke-width="1.2" /><path d="M123.4,114.5 v-5.6 h8.4 v5.6" fill="#ffe98a" stroke="#d8a520" stroke-width="1.2" /><rect x="126" y="110.8" width="2.6" height="3.4" fill="#d8a520"/><path d="M177.4,102 V111.2 H186.2Z" fill="#fddcbc" stroke="#f7962d" stroke-width="1.3" stroke-linejoin="round"/><path d="M181.6,105.8 C185,101.4 194.2,100.9 197.7,109.4 A1.6,1.6 0 0 1 194.7,110.6 C192,104.6 187.2,104.6 184.3,108.4Z" fill="#fddcbc" stroke="#f7962d" stroke-width="1.2" stroke-linejoin="round"/><g transform="translate(423.1,0) scale(-1,1)"><path d="M177.4,102 V111.2 H186.2Z" fill="#e9e9e9" stroke="#c6c6c6" stroke-width="1.3" stroke-linejoin="round"/><path d="M181.6,105.8 C185,101.4 194.2,100.9 197.7,109.4 A1.6,1.6 0 0 1 194.7,110.6 C192,104.6 187.2,104.6 184.3,108.4Z" fill="#e9e9e9" stroke="#c6c6c6" stroke-width="1.2" stroke-linejoin="round"/></g><rect x="264" y="97" width="1" height="40" fill="#c9c8c7"/><rect x="265" y="97" width="1" height="40" fill="#fbfbfb"/><g fill="#ececec" stroke="#c4c4c4" stroke-width="1.1" stroke-linejoin="round"><path d="M283.2,102.4 L297.2,114.8 L294,114.9 L281.8,104.3Z"/><path d="M283.2,111.2 L297.2,98.8 L294,98.7 L281.8,109.3Z"/><circle cx="281.3" cy="100.8" r="2.7" fill="none" stroke-width="1.4"/><circle cx="281.3" cy="112.8" r="2.7" fill="none" stroke-width="1.4"/></g><path d="M325.2,96.4 H338.6 V113.8" fill="none" stroke="#bdbcbb" stroke-width="1.3" /><rect x="322.9" y="100" width="12.4" height="16" fill="#ecebea" stroke="#bdbcbb" stroke-width="1.3"/><rect x="370.9" y="98" width="13.2" height="14.2" rx="1.6" fill="#fddcbc" stroke="#f7962d" stroke-width="1.5"/><path d="M373.6,99.6 V97.6 H375.7 L377.4,95.5 L379.1,97.6 H381.3 V99.6Z" fill="#f7962d" stroke="#f7962d" stroke-width="0.8" stroke-linejoin="round"/><circle cx="377.4" cy="97.3" r="0.7" fill="#fde9d6"/><rect x="378.5" y="101.9" width="10.7" height="14.4" rx="1.2" fill="#fddcbc" stroke="#f7962d" stroke-width="1.5"/><rect x="409" y="97" width="1" height="40" fill="#c9c8c7"/><rect x="410" y="97" width="1" height="40" fill="#fbfbfb"/><path d="M457.6,109.5 L463.9,116.1" fill="none" stroke="#3f7cbf" stroke-width="3.2" stroke-linecap="round"/><path d="M458.5,110.4 L463.7,115.9" fill="none" stroke="#c4ddf8" stroke-width="1.1" stroke-linecap="round"/><circle cx="452.3" cy="103.9" r="7.4" fill="#abd1f9" stroke="#3f7cbf" stroke-width="1.3"/><path d="M517.2,109.5 L523.5,116.1" fill="none" stroke="#3f7cbf" stroke-width="3.2" stroke-linecap="round"/><path d="M518.1,110.4 L523.3,115.9" fill="none" stroke="#c4ddf8" stroke-width="1.1" stroke-linecap="round"/><circle cx="511.9" cy="103.9" r="7.4" fill="#abd1f9" stroke="#3f7cbf" stroke-width="1.3"/><path d="M508.1,103.9 h7.6 M511.9,100.1 v7.6" fill="none" stroke="#1d3557" stroke-width="1.5" /><path d="M590.9,109.5 L597.2,116.1" fill="none" stroke="#3f7cbf" stroke-width="3.2" stroke-linecap="round"/><path d="M591.8,110.4 L597,115.9" fill="none" stroke="#c4ddf8" stroke-width="1.1" stroke-linecap="round"/><circle cx="585.6" cy="103.9" r="7.4" fill="#abd1f9" stroke="#3f7cbf" stroke-width="1.3"/><path d="M581.8,103.9 h7.6" fill="none" stroke="#1d3557" stroke-width="1.5" /><path d="M665,96.6 V115.4 M655.4,106 H674.6" fill="none" stroke="#6ea3da" stroke-width="1.2" /><path d="M665,96 L662.7,98.8 L667.3,98.8Z" fill="#3f7cbf" stroke="#3f7cbf" stroke-width="0.5" /><path d="M665,115.9 L667.3,113.1 L662.7,113.1Z" fill="#3f7cbf" stroke="#3f7cbf" stroke-width="0.5" /><path d="M655,106 L657.8,108.3 L657.8,103.7Z" fill="#3f7cbf" stroke="#3f7cbf" stroke-width="0.5" /><path d="M674.9,106 L672.1,103.7 L672.1,108.3Z" fill="#3f7cbf" stroke="#3f7cbf" stroke-width="0.5" /><path d="M668,109 L673.2,114.3" fill="none" stroke="#3f7cbf" stroke-width="2.2" stroke-linecap="round"/><circle cx="665" cy="106" r="4.6" fill="#abd1f9" stroke="#3f7cbf" stroke-width="1.2"/><path d="M662.7,106 h4.6" fill="none" stroke="#1d3557" stroke-width="1.4" /><path d="M735.6,96 L744.8,101.2 L744.8,111.6 L735.6,116.8 L726.4,111.6 L726.4,101.2Z" fill="#abd1f9" stroke="#3068a6" stroke-width="1.35" stroke-linejoin="round"/><path d="M726.4,101.2 L735.6,106.4 L744.8,101.2 M735.6,106.4 L735.6,116.8" fill="none" stroke="#3068a6" stroke-width="1.35" /><path d="M809.90,106.50 L809.90,106.72 L809.89,106.94 L809.87,107.17 L809.85,107.39 L809.83,107.61 L809.80,107.83 L809.77,108.05 L809.97,108.32 L810.41,108.66 L810.96,109.06 L811.50,109.49 L811.90,109.91 L812.04,110.27 L811.95,110.55 L811.84,110.82 L811.72,111.10 L811.60,111.36 L811.47,111.63 L811.33,111.89 L811.19,112.15 L811.03,112.40 L810.88,112.65 L810.71,112.90 L810.54,113.14 L810.36,113.38 L810.18,113.61 L809.99,113.83 L809.61,113.89 L809.04,113.75 L808.40,113.50 L807.78,113.22 L807.26,113.01 L806.93,112.97 L806.75,113.11 L806.57,113.24 L806.40,113.38 L806.21,113.51 L806.03,113.63 L805.84,113.75 L805.65,113.86 L805.46,113.97 L805.26,114.07 L805.06,114.17 L804.86,114.27 L804.65,114.35 L804.45,114.44 L804.24,114.52 L804.11,114.83 L804.03,115.38 L803.96,116.06 L803.86,116.74 L803.70,117.30 L803.46,117.60 L803.17,117.66 L802.87,117.70 L802.58,117.74 L802.29,117.77 L801.99,117.78 L801.70,117.80 L801.40,117.80 L801.10,117.80 L800.81,117.78 L800.51,117.77 L800.22,117.74 L799.93,117.70 L799.63,117.66 L799.34,117.60 L799.10,117.30 L798.94,116.74 L798.84,116.06 L798.77,115.38 L798.69,114.83 L798.56,114.52 L798.35,114.44 L798.15,114.35 L797.94,114.27 L797.74,114.17 L797.54,114.07 L797.34,113.97 L797.15,113.86 L796.96,113.75 L796.77,113.63 L796.59,113.51 L796.40,113.38 L796.23,113.24 L796.05,113.11 L795.87,112.97 L795.54,113.01 L795.02,113.22 L794.40,113.50 L793.76,113.75 L793.19,113.89 L792.81,113.83 L792.62,113.61 L792.44,113.38 L792.26,113.14 L792.09,112.90 L791.92,112.65 L791.77,112.40 L791.61,112.15 L791.47,111.89 L791.33,111.63 L791.20,111.36 L791.08,111.10 L790.96,110.82 L790.85,110.55 L790.76,110.27 L790.90,109.91 L791.30,109.49 L791.84,109.06 L792.39,108.66 L792.83,108.32 L793.03,108.05 L793.00,107.83 L792.97,107.61 L792.95,107.39 L792.93,107.17 L792.91,106.94 L792.90,106.72 L792.90,106.50 L792.90,106.28 L792.91,106.06 L792.93,105.83 L792.95,105.61 L792.97,105.39 L793.00,105.17 L793.03,104.95 L792.83,104.68 L792.39,104.34 L791.84,103.94 L791.30,103.51 L790.90,103.09 L790.76,102.73 L790.85,102.45 L790.96,102.18 L791.08,101.90 L791.20,101.64 L791.33,101.37 L791.47,101.11 L791.61,100.85 L791.77,100.60 L791.92,100.35 L792.09,100.10 L792.26,99.86 L792.44,99.62 L792.62,99.39 L792.81,99.17 L793.19,99.11 L793.76,99.25 L794.40,99.50 L795.02,99.78 L795.54,99.99 L795.87,100.03 L796.05,99.89 L796.23,99.76 L796.40,99.62 L796.59,99.49 L796.77,99.37 L796.96,99.25 L797.15,99.14 L797.34,99.03 L797.54,98.93 L797.74,98.83 L797.94,98.73 L798.15,98.65 L798.35,98.56 L798.56,98.48 L798.69,98.17 L798.77,97.62 L798.84,96.94 L798.94,96.26 L799.10,95.70 L799.34,95.40 L799.63,95.34 L799.93,95.30 L800.22,95.26 L800.51,95.23 L800.81,95.22 L801.10,95.20 L801.40,95.20 L801.70,95.20 L801.99,95.22 L802.29,95.23 L802.58,95.26 L802.87,95.30 L803.17,95.34 L803.46,95.40 L803.70,95.70 L803.86,96.26 L803.96,96.94 L804.03,97.62 L804.11,98.17 L804.24,98.48 L804.45,98.56 L804.65,98.65 L804.86,98.73 L805.06,98.83 L805.26,98.93 L805.46,99.03 L805.65,99.14 L805.84,99.25 L806.03,99.37 L806.21,99.49 L806.40,99.62 L806.57,99.76 L806.75,99.89 L806.93,100.03 L807.26,99.99 L807.78,99.78 L808.40,99.50 L809.04,99.25 L809.61,99.11 L809.99,99.17 L810.18,99.39 L810.36,99.62 L810.54,99.86 L810.71,100.10 L810.88,100.35 L811.03,100.60 L811.19,100.85 L811.33,101.11 L811.47,101.37 L811.60,101.64 L811.72,101.90 L811.84,102.18 L811.95,102.45 L812.04,102.73 L811.90,103.09 L811.50,103.51 L810.96,103.94 L810.41,104.34 L809.97,104.68 L809.77,104.95 L809.80,105.17 L809.83,105.39 L809.85,105.61 L809.87,105.83 L809.89,106.06 L809.90,106.28Z" fill="#abd1f9" stroke="#3873b3" stroke-width="1.3" stroke-linejoin="round"/><path d="M794.6,106.5 Q801.4,99.6 808.2,106.5 Q801.4,113.4 794.6,106.5Z" fill="#cfe4fb" stroke="#3873b3" stroke-width="1.1" /><circle cx="801.4" cy="106.5" r="2.9" fill="#e8f2fd" stroke="#3873b3" stroke-width="1.3"/><path d="M857,116.6 V99.6 M853.4,103.6 L857,99.4 L860.6,103.6" fill="none" stroke="#a9a9a9" stroke-width="1.3" /><path d="M868.6,99.6 L876.2,103.3 L876.2,110.7 L868.6,114.4 L861,110.7 L861,103.3Z" fill="#dedede" stroke="#9d9d9d" stroke-width="1.0" stroke-linejoin="round"/><path d="M861,103.3 L868.6,107 L876.2,103.3 M868.6,107 L868.6,114.4" fill="none" stroke="#9d9d9d" stroke-width="1.0" /><path d="M861,105.767 L868.6,109.467 L876.2,105.767" fill="none" stroke="#9d9d9d" stroke-width="0.9" /><path d="M861,108.233 L868.6,111.933 L876.2,108.233" fill="none" stroke="#9d9d9d" stroke-width="0.9" /><path d="M900.6,98.8 V116 M897,112 L900.6,116.4 L904.2,112" fill="none" stroke="#2b5a96" stroke-width="1.3" /><path d="M911.4,99.6 L919,103.3 L919,110.7 L911.4,114.4 L903.8,110.7 L903.8,103.3Z" fill="#a4ccf6" stroke="#2f66a6" stroke-width="1.05" stroke-linejoin="round"/><path d="M903.8,103.3 L911.4,107 L919,103.3 M911.4,107 L911.4,114.4" fill="none" stroke="#2f66a6" stroke-width="1.05" /><path d="M903.8,105.767 L911.4,109.467 L919,105.767" fill="none" stroke="#2f66a6" stroke-width="0.9450000000000001" /><path d="M903.8,108.233 L911.4,111.933 L919,108.233" fill="none" stroke="#2f66a6" stroke-width="0.9450000000000001" /><rect x="934.5" y="105.5" width="56" height="22" rx="4" fill="#fff" stroke="#a3a19f" stroke-width="1"/><rect x="970" y="109" width="1" height="15" fill="#d0cfce"/><path d="M976.8,116 L979.8,112.6 L982.8,116 M976.8,118.6 L979.8,122 L982.8,118.6" fill="none" stroke="#1a1a1a" stroke-width="1.4" /><path d="M1056.40,106.50 L1056.40,106.73 L1056.39,106.96 L1056.37,107.18 L1056.35,107.41 L1056.33,107.64 L1056.29,107.86 L1056.26,108.09 L1056.46,108.36 L1056.90,108.71 L1057.46,109.11 L1057.99,109.55 L1058.39,109.97 L1058.53,110.34 L1058.44,110.62 L1058.32,110.90 L1058.21,111.18 L1058.08,111.45 L1057.95,111.72 L1057.81,111.99 L1057.66,112.25 L1057.51,112.51 L1057.34,112.76 L1057.18,113.01 L1057.00,113.26 L1056.82,113.50 L1056.64,113.74 L1056.44,113.96 L1056.05,114.02 L1055.49,113.89 L1054.84,113.64 L1054.22,113.37 L1053.69,113.16 L1053.36,113.12 L1053.18,113.26 L1053.00,113.40 L1052.81,113.54 L1052.63,113.67 L1052.44,113.80 L1052.25,113.92 L1052.05,114.03 L1051.85,114.15 L1051.65,114.25 L1051.45,114.35 L1051.24,114.45 L1051.03,114.54 L1050.82,114.62 L1050.61,114.71 L1050.47,115.02 L1050.39,115.58 L1050.31,116.26 L1050.21,116.94 L1050.04,117.50 L1049.79,117.80 L1049.50,117.86 L1049.20,117.90 L1048.90,117.94 L1048.60,117.96 L1048.30,117.98 L1048.00,118.00 L1047.70,118.00 L1047.40,118.00 L1047.10,117.98 L1046.80,117.96 L1046.50,117.94 L1046.20,117.90 L1045.90,117.86 L1045.61,117.80 L1045.36,117.50 L1045.19,116.94 L1045.09,116.26 L1045.01,115.58 L1044.93,115.02 L1044.79,114.71 L1044.58,114.62 L1044.37,114.54 L1044.16,114.45 L1043.95,114.35 L1043.75,114.25 L1043.55,114.15 L1043.35,114.03 L1043.15,113.92 L1042.96,113.80 L1042.77,113.67 L1042.59,113.54 L1042.40,113.40 L1042.22,113.26 L1042.04,113.12 L1041.71,113.16 L1041.18,113.37 L1040.56,113.64 L1039.91,113.89 L1039.35,114.02 L1038.96,113.96 L1038.76,113.74 L1038.58,113.50 L1038.40,113.26 L1038.22,113.01 L1038.06,112.76 L1037.89,112.51 L1037.74,112.25 L1037.59,111.99 L1037.45,111.72 L1037.32,111.45 L1037.19,111.18 L1037.08,110.90 L1036.96,110.62 L1036.87,110.34 L1037.01,109.97 L1037.41,109.55 L1037.94,109.11 L1038.50,108.71 L1038.94,108.36 L1039.14,108.09 L1039.11,107.86 L1039.07,107.64 L1039.05,107.41 L1039.03,107.18 L1039.01,106.96 L1039.00,106.73 L1039.00,106.50 L1039.00,106.27 L1039.01,106.04 L1039.03,105.82 L1039.05,105.59 L1039.07,105.36 L1039.11,105.14 L1039.14,104.91 L1038.94,104.64 L1038.50,104.29 L1037.94,103.89 L1037.41,103.45 L1037.01,103.03 L1036.87,102.66 L1036.96,102.38 L1037.08,102.10 L1037.19,101.82 L1037.32,101.55 L1037.45,101.28 L1037.59,101.01 L1037.74,100.75 L1037.89,100.49 L1038.06,100.24 L1038.22,99.99 L1038.40,99.74 L1038.58,99.50 L1038.76,99.26 L1038.96,99.04 L1039.35,98.98 L1039.91,99.11 L1040.56,99.36 L1041.18,99.63 L1041.71,99.84 L1042.04,99.88 L1042.22,99.74 L1042.40,99.60 L1042.59,99.46 L1042.77,99.33 L1042.96,99.20 L1043.15,99.08 L1043.35,98.97 L1043.55,98.85 L1043.75,98.75 L1043.95,98.65 L1044.16,98.55 L1044.37,98.46 L1044.58,98.38 L1044.79,98.29 L1044.93,97.98 L1045.01,97.42 L1045.09,96.74 L1045.19,96.06 L1045.36,95.50 L1045.61,95.20 L1045.90,95.14 L1046.20,95.10 L1046.50,95.06 L1046.80,95.04 L1047.10,95.02 L1047.40,95.00 L1047.70,95.00 L1048.00,95.00 L1048.30,95.02 L1048.60,95.04 L1048.90,95.06 L1049.20,95.10 L1049.50,95.14 L1049.79,95.20 L1050.04,95.50 L1050.21,96.06 L1050.31,96.74 L1050.39,97.42 L1050.47,97.98 L1050.61,98.29 L1050.82,98.38 L1051.03,98.46 L1051.24,98.55 L1051.45,98.65 L1051.65,98.75 L1051.85,98.85 L1052.05,98.97 L1052.25,99.08 L1052.44,99.20 L1052.63,99.33 L1052.81,99.46 L1053.00,99.60 L1053.18,99.74 L1053.36,99.88 L1053.69,99.84 L1054.22,99.63 L1054.84,99.36 L1055.49,99.11 L1056.05,98.98 L1056.44,99.04 L1056.64,99.26 L1056.82,99.50 L1057.00,99.74 L1057.18,99.99 L1057.34,100.24 L1057.51,100.49 L1057.66,100.75 L1057.81,101.01 L1057.95,101.28 L1058.08,101.55 L1058.21,101.82 L1058.32,102.10 L1058.44,102.38 L1058.53,102.66 L1058.39,103.03 L1057.99,103.45 L1057.46,103.89 L1056.90,104.29 L1056.46,104.64 L1056.26,104.91 L1056.29,105.14 L1056.33,105.36 L1056.35,105.59 L1056.37,105.82 L1056.39,106.04 L1056.40,106.27Z" fill="#bfe6cc" stroke="#23914a" stroke-width="1.2" stroke-linejoin="round"/><path d="M1047.7,100.2 L1053.1,103.3 L1053.1,109.5 L1047.7,112.6 L1042.3,109.5 L1042.3,103.3Z" fill="#6cc48a" stroke="#1f8a42" stroke-width="0.9" stroke-linejoin="round"/><path d="M1042.3,103.3 L1047.7,106.4 L1053.1,103.3 M1047.7,106.4 L1047.7,112.6" fill="none" stroke="#1f8a42" stroke-width="0.9" /><path d="M1042.3,105.367 L1047.7,108.467 L1053.1,105.367" fill="none" stroke="#1f8a42" stroke-width="0.81" /><path d="M1042.3,107.433 L1047.7,110.533 L1053.1,107.433" fill="none" stroke="#1f8a42" stroke-width="0.81" /><g transform="translate(1138.7,96.7) scale(1)"><path d="M-0.3,-0.6 L13,6 L-0.3,12.6Z" fill="#0a8a2a" stroke="none" stroke-width="1" /><text x="0" y="20.1" font-family='"Liberation Sans",sans-serif' font-size="13.2" font-weight="bold" font-style="italic" fill="#0a8a2a" textLength="21.6" lengthAdjust="spacingAndGlyphs">em</text></g><path d="M1207.45,114.75 L1211.9,118.35 L1216.35,114.75" fill="none" stroke="#000" stroke-width="1.8" stroke-linecap="butt" stroke-linejoin="miter"/><rect x="1243.4" y="97.9" width="18.6" height="17.6" fill="#fde6d0" stroke="#fa8f1e" stroke-width="1.6"/><path d="M1244.6,101.3 h2.6 c1.6,0 1.2,9.6 2.6,9.6 c1.4,0 1.2,-9.6 3.2,-9.6 h7.6" fill="none" stroke="#f8a045" stroke-width="1.2" /><path d="M1287.55,114.75 L1292,118.35 L1296.45,114.75" fill="none" stroke="#000" stroke-width="1.8" stroke-linecap="butt" stroke-linejoin="miter"/><path d="M1335.40,104.02 L1335.27,103.90 L1335.16,103.72 L1335.05,103.49 L1334.92,103.22 L1334.76,102.95 L1334.56,102.68 L1334.33,102.45 L1334.07,102.27 L1333.79,102.17 L1333.51,102.16 L1333.23,102.21 L1332.96,102.28 L1332.69,102.35 L1332.41,102.44 L1332.15,102.54 L1331.88,102.66 L1331.62,102.79 L1331.36,102.94 L1331.11,103.11 L1330.87,103.30 L1330.64,103.51 L1330.42,103.74 L1330.22,103.99 L1330.04,104.25 L1329.89,104.53 L1329.75,104.82 L1329.64,105.13 L1329.57,105.45 L1329.52,105.77 L1329.50,106.10 L1329.51,106.43 L1329.56,106.75 L1329.63,107.07 L1329.72,107.38 L1329.84,107.69 L1329.99,107.98 L1330.15,108.25 L1330.34,108.51 L1330.54,108.76 L1330.76,108.99 L1330.99,109.20 L1331.24,109.39 L1331.50,109.56 L1331.76,109.71 L1332.04,109.85 L1332.31,109.97 L1332.60,110.06 L1332.89,110.14 L1333.18,110.21 L1333.47,110.25 L1333.76,110.28 L1334.05,110.30 L1334.35,110.30 L1334.64,110.29 L1334.94,110.27 L1335.23,110.24 L1335.53,110.20 L1335.84,110.15 L1336.14,110.07 L1336.44,109.98 L1336.75,109.87 L1337.05,109.74 L1337.34,109.59 L1337.63,109.41 L1337.91,109.21 L1338.17,108.99 L1338.42,108.74 L1338.66,108.47 L1338.87,108.18 L1339.05,107.87 L1339.21,107.54 L1339.33,107.19 L1339.42,106.83 L1339.48,106.47 L1339.50,106.10 L1339.52,105.73 L1339.56,105.35 L1339.63,104.95 L1339.69,104.53 L1339.74,104.08 L1339.77,103.62 L1339.76,103.14 L1339.71,102.66 L1339.60,102.18 L1339.43,101.71 L1339.19,101.28 L1338.88,100.90 L1338.51,100.58 L1338.15,100.24 L1337.79,99.88 L1337.42,99.51 L1337.02,99.13 L1336.59,98.76 L1336.12,98.41 L1335.61,98.09 L1335.07,97.82 L1334.50,97.61 L1333.90,97.48 L1333.29,97.43 L1332.68,97.48 L1332.08,97.60 L1331.49,97.75 L1330.90,97.93 L1330.32,98.15 L1329.75,98.39 L1329.19,98.68 L1328.65,98.99 L1328.12,99.35 L1327.62,99.74 L1327.13,100.17 L1326.68,100.64 L1326.26,101.14 L1325.87,101.67 L1325.53,102.24 L1325.22,102.83 L1324.97,103.45 L1324.77,104.10 L1324.62,104.75 L1324.53,105.42 L1324.50,106.10 L1324.52,106.78 L1324.60,107.45 L1324.72,108.11 L1324.89,108.77 L1325.11,109.41 L1325.37,110.03 L1325.68,110.63 L1326.02,111.21 L1326.41,111.76 L1326.83,112.28 L1327.29,112.77 L1327.78,113.23 L1328.30,113.65 L1328.85,114.03 L1329.42,114.37 L1330.02,114.67 L1330.63,114.94 L1331.26,115.15 L1331.90,115.33 L1332.55,115.46 L1333.21,115.55 L1333.87,115.59 L1334.53,115.60 L1335.19,115.56 L1335.86,115.49 L1336.52,115.38 L1337.17,115.24 L1337.82,115.06 L1338.46,114.83 L1339.09,114.57 L1339.71,114.26 L1340.31,113.92 L1340.89,113.53 L1341.44,113.09 L1341.97,112.62 L1342.47,112.11 L1342.93,111.56 L1343.35,110.97 L1343.73,110.35 L1344.07,109.69 L1344.35,109.01 L1344.58,108.31 L1344.76,107.58 L1344.87,106.85 L1344.93,106.10 L1344.92,105.35 L1344.85,104.60" fill="none" stroke="#d40a0a" stroke-width="1.6" stroke-linecap="round" stroke-linejoin="round"/><path d="M1394.35,111.97 A9.6,9.6 0 1 1 1409.05,111.97" fill="none" stroke="#a21cf0" stroke-width="2.2" stroke-linecap="round"/><path d="M1397.20,108.40 A5.2,5.2 0 1 1 1406.20,108.40" fill="none" stroke="#a21cf0" stroke-width="2.0" stroke-linecap="round"/><path d="M1397.8,116 L1401.7,103.5 L1405.6,116" fill="none" stroke="#a21cf0" stroke-width="2.1" stroke-linejoin="miter" stroke-linecap="round"/><circle cx="1401.7" cy="106.2" r="2.2" fill="#a21cf0"/><rect x="187.5" y="167.5" width="11" height="11" rx="1.5" fill="#fff" stroke="#8f8d8b"/><rect x="296.1" y="152.1" width="20.1" height="16.9" fill="#f2f2f2" stroke="#000" stroke-width="2.2" stroke-dasharray="2.1,1.25"/><clipPath id="cp5"><path d="M298.6,155.6 h14.8 v9.2 h-14.8z"/></clipPath><g clip-path="url(#cp5)"><rect x="298" y="155" width="16" height="11" fill="#fbe3e3"/><path d="M290.9,155.6 L300.1,164.8 M295.5,155.6 L304.7,164.8 M300.1,155.6 L309.3,164.8 M304.7,155.6 L313.9,164.8 M309.3,155.6 L318.5,164.8 " fill="none" stroke="#e23b3b" stroke-width="1.0" /></g><rect x="298.6" y="155.6" width="14.8" height="9.2" fill="none" stroke="#e01b1b" stroke-width="1.2"/><rect x="348" y="153" width="1" height="41" fill="#c9c8c7"/><rect x="349" y="153" width="1" height="41" fill="#fbfbfb"/><path d="M383,152.8 H400.4 Q401.2,153.4 400.5,154.3 L393.7,161.2 V172.4 L389.3,168.4 V161.2 L382.9,154.3 Q382.2,153.4 383,152.8Z" fill="#b9d9fb" stroke="#3d72b0" stroke-width="1.2" stroke-linejoin="round"/><path d="M452.9,162.4 C457.5,153.2 469.5,153.2 474.1,162.4 C469.5,171.6 457.5,171.6 452.9,162.4Z" fill="#b9d9fb" stroke="#2f66a6" stroke-width="1.3" stroke-linejoin="round"/><circle cx="463.5" cy="162.4" r="4.3" fill="#fff" stroke="#8aa6c8" stroke-width="0.8"/><circle cx="463.3" cy="162.6" r="2.9" fill="#1f4e86"/><circle cx="465.2" cy="160.7" r="1.35" fill="#fff"/><path d="M503.45,171 L507.9,174.6 L512.35,171" fill="none" stroke="#000" stroke-width="1.8" stroke-linecap="butt" stroke-linejoin="miter"/><defs><linearGradient id="snapg" x1="0" y1="0" x2="0" y2="1"><stop offset="0" stop-color="#dddcdb"/><stop offset="0.5" stop-color="#cfcecd"/><stop offset="1" stop-color="#c5c4c3"/></linearGradient></defs><rect x="519.5" y="148.5" width="50" height="49" rx="4" fill="url(#snapg)" stroke="#8b8987"/><path d="M545.00,168.80 L547.69,171.49 M540.20,168.80 L537.51,171.49 M540.20,164.00 L537.51,161.31 M545.00,164.00 L547.69,161.31 " fill="none" stroke="#f3bd3a" stroke-width="1.5" /><path d="M535.6,166.4 H549.6 M542.6,159.4 V173.4" fill="none" stroke="#e9b532" stroke-width="1.6" /><path d="M542.6,152 V159.5 M542.6,173.2 V174.8 M552,152 V174.8 M534,156.7 H557 M534,166.4 H535.6 M549.6,166.4 H557" fill="none" stroke="#24548f" stroke-width="2.0" /><path d="M542.6,164.2 L544.8,166.4 L542.6,168.6 L540.4,166.4Z" fill="#24548f" stroke="none" stroke-width="1" /><path d="M576.55,171 L581,174.6 L585.45,171" fill="none" stroke="#000" stroke-width="1.8" stroke-linecap="butt" stroke-linejoin="miter"/><path d="M616.6,153.5 V171.5 M610.5,165.2 H629" fill="none" stroke="#3f72ad" stroke-width="1.6" /><path d="M616.6,151 L613.1,154.9 L620.1,154.9Z" fill="#245d9b" stroke="#245d9b" stroke-width="0.4" stroke-linejoin="round"/><path d="M616.6,173.5 L620.1,169.6 L613.1,169.6Z" fill="#245d9b" stroke="#245d9b" stroke-width="0.4" stroke-linejoin="round"/><path d="M608.3,165.2 L612.2,168.7 L612.2,161.7Z" fill="#245d9b" stroke="#245d9b" stroke-width="0.4" stroke-linejoin="round"/><path d="M631.2,165.2 L627.3,161.7 L627.3,168.7Z" fill="#245d9b" stroke="#245d9b" stroke-width="0.4" stroke-linejoin="round"/><path d="M653.45,171 L657.9,174.6 L662.35,171" fill="none" stroke="#000" stroke-width="1.8" stroke-linecap="butt" stroke-linejoin="miter"/><circle cx="1903.6" cy="71.5" r="9.7" fill="#c2dcf8" stroke="#3a6fa8" stroke-width="1.05"/><text x="1903.6" y="77.902" text-anchor="middle" font-family='"Liberation Sans",sans-serif' font-size="17.945" fill="#1f4e86" stroke="#1f4e86" stroke-width="0.4">?</text><circle cx="1895.6" cy="162.4" r="9.5" fill="#c2dcf8" stroke="#3a6fa8" stroke-width="1.05"/><text x="1895.6" y="168.67" text-anchor="middle" font-family='"Liberation Sans",sans-serif' font-size="17.575" fill="#1f4e86" stroke="#1f4e86" stroke-width="0.4">?</text><rect x="5.3" y="109" width="1.15" height="1.15" fill="#b0aeac"/><rect x="8.3" y="109" width="1.15" height="1.15" fill="#b0aeac"/><rect x="5.3" y="112" width="1.15" height="1.15" fill="#b0aeac"/><rect x="8.3" y="112" width="1.15" height="1.15" fill="#b0aeac"/><rect x="5.3" y="115" width="1.15" height="1.15" fill="#b0aeac"/><rect x="8.3" y="115" width="1.15" height="1.15" fill="#b0aeac"/><rect x="5.3" y="118" width="1.15" height="1.15" fill="#b0aeac"/><rect x="8.3" y="118" width="1.15" height="1.15" fill="#b0aeac"/><rect x="5.3" y="121" width="1.15" height="1.15" fill="#b0aeac"/><rect x="8.3" y="121" width="1.15" height="1.15" fill="#b0aeac"/><rect x="5.3" y="124" width="1.15" height="1.15" fill="#b0aeac"/><rect x="8.3" y="124" width="1.15" height="1.15" fill="#b0aeac"/><rect x="155.8" y="109" width="1.15" height="1.15" fill="#b0aeac"/><rect x="158.8" y="109" width="1.15" height="1.15" fill="#b0aeac"/><rect x="155.8" y="112" width="1.15" height="1.15" fill="#b0aeac"/><rect x="158.8" y="112" width="1.15" height="1.15" fill="#b0aeac"/><rect x="155.8" y="115" width="1.15" height="1.15" fill="#b0aeac"/><rect x="158.8" y="115" width="1.15" height="1.15" fill="#b0aeac"/><rect x="155.8" y="118" width="1.15" height="1.15" fill="#b0aeac"/><rect x="158.8" y="118" width="1.15" height="1.15" fill="#b0aeac"/><rect x="155.8" y="121" width="1.15" height="1.15" fill="#b0aeac"/><rect x="158.8" y="121" width="1.15" height="1.15" fill="#b0aeac"/><rect x="155.8" y="124" width="1.15" height="1.15" fill="#b0aeac"/><rect x="158.8" y="124" width="1.15" height="1.15" fill="#b0aeac"/><rect x="420.8" y="109" width="1.15" height="1.15" fill="#b0aeac"/><rect x="423.8" y="109" width="1.15" height="1.15" fill="#b0aeac"/><rect x="420.8" y="112" width="1.15" height="1.15" fill="#b0aeac"/><rect x="423.8" y="112" width="1.15" height="1.15" fill="#b0aeac"/><rect x="420.8" y="115" width="1.15" height="1.15" fill="#b0aeac"/><rect x="423.8" y="115" width="1.15" height="1.15" fill="#b0aeac"/><rect x="420.8" y="118" width="1.15" height="1.15" fill="#b0aeac"/><rect x="423.8" y="118" width="1.15" height="1.15" fill="#b0aeac"/><rect x="420.8" y="121" width="1.15" height="1.15" fill="#b0aeac"/><rect x="423.8" y="121" width="1.15" height="1.15" fill="#b0aeac"/><rect x="420.8" y="124" width="1.15" height="1.15" fill="#b0aeac"/><rect x="423.8" y="124" width="1.15" height="1.15" fill="#b0aeac"/><rect x="840.2" y="109" width="1.15" height="1.15" fill="#b0aeac"/><rect x="843.2" y="109" width="1.15" height="1.15" fill="#b0aeac"/><rect x="840.2" y="112" width="1.15" height="1.15" fill="#b0aeac"/><rect x="843.2" y="112" width="1.15" height="1.15" fill="#b0aeac"/><rect x="840.2" y="115" width="1.15" height="1.15" fill="#b0aeac"/><rect x="843.2" y="115" width="1.15" height="1.15" fill="#b0aeac"/><rect x="840.2" y="118" width="1.15" height="1.15" fill="#b0aeac"/><rect x="843.2" y="118" width="1.15" height="1.15" fill="#b0aeac"/><rect x="840.2" y="121" width="1.15" height="1.15" fill="#b0aeac"/><rect x="843.2" y="121" width="1.15" height="1.15" fill="#b0aeac"/><rect x="840.2" y="124" width="1.15" height="1.15" fill="#b0aeac"/><rect x="843.2" y="124" width="1.15" height="1.15" fill="#b0aeac"/><rect x="1005.8" y="109" width="1.15" height="1.15" fill="#b0aeac"/><rect x="1008.8" y="109" width="1.15" height="1.15" fill="#b0aeac"/><rect x="1005.8" y="112" width="1.15" height="1.15" fill="#b0aeac"/><rect x="1008.8" y="112" width="1.15" height="1.15" fill="#b0aeac"/><rect x="1005.8" y="115" width="1.15" height="1.15" fill="#b0aeac"/><rect x="1008.8" y="115" width="1.15" height="1.15" fill="#b0aeac"/><rect x="1005.8" y="118" width="1.15" height="1.15" fill="#b0aeac"/><rect x="1008.8" y="118" width="1.15" height="1.15" fill="#b0aeac"/><rect x="1005.8" y="121" width="1.15" height="1.15" fill="#b0aeac"/><rect x="1008.8" y="121" width="1.15" height="1.15" fill="#b0aeac"/><rect x="1005.8" y="124" width="1.15" height="1.15" fill="#b0aeac"/><rect x="1008.8" y="124" width="1.15" height="1.15" fill="#b0aeac"/><rect x="1087.8" y="109" width="1.15" height="1.15" fill="#b0aeac"/><rect x="1090.8" y="109" width="1.15" height="1.15" fill="#b0aeac"/><rect x="1087.8" y="112" width="1.15" height="1.15" fill="#b0aeac"/><rect x="1090.8" y="112" width="1.15" height="1.15" fill="#b0aeac"/><rect x="1087.8" y="115" width="1.15" height="1.15" fill="#b0aeac"/><rect x="1090.8" y="115" width="1.15" height="1.15" fill="#b0aeac"/><rect x="1087.8" y="118" width="1.15" height="1.15" fill="#b0aeac"/><rect x="1090.8" y="118" width="1.15" height="1.15" fill="#b0aeac"/><rect x="1087.8" y="121" width="1.15" height="1.15" fill="#b0aeac"/><rect x="1090.8" y="121" width="1.15" height="1.15" fill="#b0aeac"/><rect x="1087.8" y="124" width="1.15" height="1.15" fill="#b0aeac"/><rect x="1090.8" y="124" width="1.15" height="1.15" fill="#b0aeac"/><rect x="5.3" y="165" width="1.15" height="1.15" fill="#b0aeac"/><rect x="8.3" y="165" width="1.15" height="1.15" fill="#b0aeac"/><rect x="5.3" y="168" width="1.15" height="1.15" fill="#b0aeac"/><rect x="8.3" y="168" width="1.15" height="1.15" fill="#b0aeac"/><rect x="5.3" y="171" width="1.15" height="1.15" fill="#b0aeac"/><rect x="8.3" y="171" width="1.15" height="1.15" fill="#b0aeac"/><rect x="5.3" y="174" width="1.15" height="1.15" fill="#b0aeac"/><rect x="8.3" y="174" width="1.15" height="1.15" fill="#b0aeac"/><rect x="5.3" y="177" width="1.15" height="1.15" fill="#b0aeac"/><rect x="8.3" y="177" width="1.15" height="1.15" fill="#b0aeac"/><rect x="5.3" y="180" width="1.15" height="1.15" fill="#b0aeac"/><rect x="8.3" y="180" width="1.15" height="1.15" fill="#b0aeac"/><rect x="110.3" y="165" width="1.15" height="1.15" fill="#b0aeac"/><rect x="113.3" y="165" width="1.15" height="1.15" fill="#b0aeac"/><rect x="110.3" y="168" width="1.15" height="1.15" fill="#b0aeac"/><rect x="113.3" y="168" width="1.15" height="1.15" fill="#b0aeac"/><rect x="110.3" y="171" width="1.15" height="1.15" fill="#b0aeac"/><rect x="113.3" y="171" width="1.15" height="1.15" fill="#b0aeac"/><rect x="110.3" y="174" width="1.15" height="1.15" fill="#b0aeac"/><rect x="113.3" y="174" width="1.15" height="1.15" fill="#b0aeac"/><rect x="110.3" y="177" width="1.15" height="1.15" fill="#b0aeac"/><rect x="113.3" y="177" width="1.15" height="1.15" fill="#b0aeac"/><rect x="110.3" y="180" width="1.15" height="1.15" fill="#b0aeac"/><rect x="113.3" y="180" width="1.15" height="1.15" fill="#b0aeac"/></svg>
</body></html>
